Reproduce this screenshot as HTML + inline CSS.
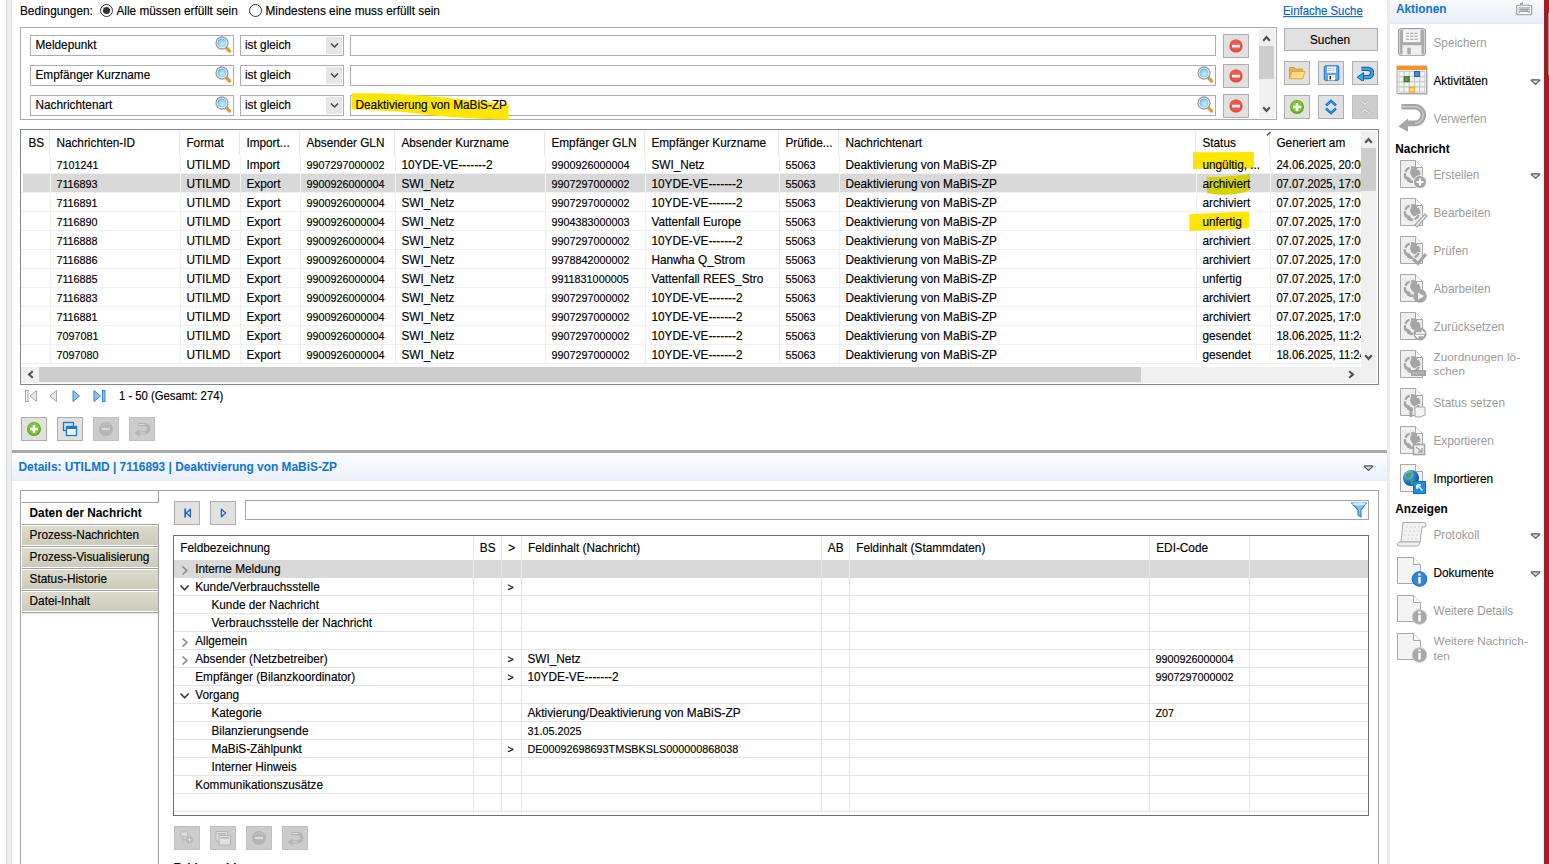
<!DOCTYPE html><html><head><meta charset="utf-8"><style>
html,body{margin:0;padding:0;background:#fff;}
body{width:1549px;height:864px;overflow:hidden;position:relative;font-family:"Liberation Sans",sans-serif;}
.t{position:absolute;white-space:nowrap;line-height:16px;}
.r{position:absolute;box-sizing:border-box;}
.clip{position:absolute;overflow:hidden;}
</style></head><body>
<div class="r" style="left:6px;top:0px;width:6px;height:864px;background:#eeeeee;border-left:1px solid #d6d6d6;border-right:1px solid #dedede;"></div>
<div class="t " style="left:20px;top:2.91px;font-size:11.8px;color:#000;font-weight:400;transform:scaleY(1.08);transform-origin:0 12.09px;-webkit-text-stroke:0.15px #000;">Bedingungen:</div>
<svg class="r" style="left:100px;top:4px;" width="14" height="14" viewBox="0 0 14 14"><circle cx="6.5" cy="6.5" r="6" fill="#fff" stroke="#333" stroke-width="1"/><circle cx="6.5" cy="6.5" r="3.5" fill="#333"/></svg>
<div class="t " style="left:116.5px;top:2.91px;font-size:11.8px;color:#000;font-weight:400;transform:scaleY(1.08);transform-origin:0 12.09px;-webkit-text-stroke:0.15px #000;">Alle müssen erfüllt sein</div>
<svg class="r" style="left:249px;top:4px;" width="14" height="14" viewBox="0 0 14 14"><circle cx="6.5" cy="6.5" r="6" fill="#fff" stroke="#333" stroke-width="1"/></svg>
<div class="t " style="left:265.5px;top:2.91px;font-size:11.8px;color:#000;font-weight:400;transform:scaleY(1.08);transform-origin:0 12.09px;-webkit-text-stroke:0.15px #000;">Mindestens eine muss erfüllt sein</div>
<div class="t " style="left:1283px;top:3.05px;font-size:11.4px;color:#0b62c9;font-weight:400;transform:scaleY(1.08);transform-origin:0 11.95px;-webkit-text-stroke:0.15px #0b62c9;text-decoration:underline;">Einfache Suche</div>
<div class="r" style="left:20px;top:27px;width:1257px;height:93px;border:1px solid #a9abb0;"></div>
<div class="r" style="left:30px;top:35px;width:204px;height:21px;border:1px solid #abadb3;background:#fff;"></div>
<div class="t " style="left:35.5px;top:36.91px;font-size:11.8px;color:#000;font-weight:400;transform:scaleY(1.08);transform-origin:0 12.09px;-webkit-text-stroke:0.15px #000;">Meldepunkt</div>
<svg class="r" style="left:215.0px;top:36.3px;" width="17" height="17" viewBox="0 0 17 17"><defs><radialGradient id="mg265" cx="55%" cy="60%" r="60%"><stop offset="0" stop-color="#c6f0fb"/><stop offset=".7" stop-color="#8fd0f3"/><stop offset="1" stop-color="#4ea3e6"/></radialGradient></defs><path d="M11 11.5 L14.5 15" stroke="#e49a2c" stroke-width="3.2" stroke-linecap="round"/><circle cx="7" cy="7" r="6" fill="#fff" stroke="#9c9ea2" stroke-width="1.3"/><circle cx="7" cy="7" r="4.6" fill="url(#mg265)"/></svg>
<div class="r" style="left:240px;top:35px;width:104px;height:21px;border:1px solid #abadb3;background:#fff;"></div>
<div class="r" style="left:326px;top:37px;width:16px;height:17px;background:#e6e6e6;"></div>
<svg class="r" style="left:330px;top:41px;" width="9" height="9" viewBox="0 0 9 9"><path d="M1 2.5 L4.5 6 L8 2.5" fill="none" stroke="#444" stroke-width="1.5"/></svg>
<div class="t " style="left:245px;top:36.91px;font-size:11.8px;color:#000;font-weight:400;transform:scaleY(1.08);transform-origin:0 12.09px;-webkit-text-stroke:0.15px #000;">ist gleich</div>
<div class="r" style="left:350px;top:35px;width:866px;height:21px;border:1px solid #abadb3;background:#fff;"></div>
<div class="r" style="left:1223px;top:34px;width:26px;height:24px;background:#e1e1e1;border:1px solid #adadad;"></div>
<svg class="r" style="left:1229px;top:39px;" width="14" height="14" viewBox="0 0 14 14"><circle cx="7" cy="7" r="6.6" fill="#e8463c"/><circle cx="7" cy="6" r="5.5" fill="#f0584c"/><rect x="3" y="5.8" width="8" height="2.6" fill="#fff"/></svg>
<div class="r" style="left:30px;top:65px;width:204px;height:21px;border:1px solid #abadb3;background:#fff;"></div>
<div class="t " style="left:35.5px;top:66.91px;font-size:11.8px;color:#000;font-weight:400;transform:scaleY(1.08);transform-origin:0 12.09px;-webkit-text-stroke:0.15px #000;">Empfänger Kurzname</div>
<svg class="r" style="left:215.0px;top:66.3px;" width="17" height="17" viewBox="0 0 17 17"><defs><radialGradient id="mg295" cx="55%" cy="60%" r="60%"><stop offset="0" stop-color="#c6f0fb"/><stop offset=".7" stop-color="#8fd0f3"/><stop offset="1" stop-color="#4ea3e6"/></radialGradient></defs><path d="M11 11.5 L14.5 15" stroke="#e49a2c" stroke-width="3.2" stroke-linecap="round"/><circle cx="7" cy="7" r="6" fill="#fff" stroke="#9c9ea2" stroke-width="1.3"/><circle cx="7" cy="7" r="4.6" fill="url(#mg295)"/></svg>
<div class="r" style="left:240px;top:65px;width:104px;height:21px;border:1px solid #abadb3;background:#fff;"></div>
<div class="r" style="left:326px;top:67px;width:16px;height:17px;background:#e6e6e6;"></div>
<svg class="r" style="left:330px;top:71px;" width="9" height="9" viewBox="0 0 9 9"><path d="M1 2.5 L4.5 6 L8 2.5" fill="none" stroke="#444" stroke-width="1.5"/></svg>
<div class="t " style="left:245px;top:66.91px;font-size:11.8px;color:#000;font-weight:400;transform:scaleY(1.08);transform-origin:0 12.09px;-webkit-text-stroke:0.15px #000;">ist gleich</div>
<div class="r" style="left:350px;top:65px;width:866px;height:21px;border:1px solid #abadb3;background:#fff;"></div>
<svg class="r" style="left:1197.0px;top:66.3px;" width="17" height="17" viewBox="0 0 17 17"><defs><radialGradient id="mg1277" cx="55%" cy="60%" r="60%"><stop offset="0" stop-color="#c6f0fb"/><stop offset=".7" stop-color="#8fd0f3"/><stop offset="1" stop-color="#4ea3e6"/></radialGradient></defs><path d="M11 11.5 L14.5 15" stroke="#e49a2c" stroke-width="3.2" stroke-linecap="round"/><circle cx="7" cy="7" r="6" fill="#fff" stroke="#9c9ea2" stroke-width="1.3"/><circle cx="7" cy="7" r="4.6" fill="url(#mg1277)"/></svg>
<div class="r" style="left:1223px;top:64px;width:26px;height:24px;background:#e1e1e1;border:1px solid #adadad;"></div>
<svg class="r" style="left:1229px;top:69px;" width="14" height="14" viewBox="0 0 14 14"><circle cx="7" cy="7" r="6.6" fill="#e8463c"/><circle cx="7" cy="6" r="5.5" fill="#f0584c"/><rect x="3" y="5.8" width="8" height="2.6" fill="#fff"/></svg>
<div class="r" style="left:30px;top:95px;width:204px;height:21px;border:1px solid #abadb3;background:#fff;"></div>
<div class="t " style="left:35.5px;top:96.91px;font-size:11.8px;color:#000;font-weight:400;transform:scaleY(1.08);transform-origin:0 12.09px;-webkit-text-stroke:0.15px #000;">Nachrichtenart</div>
<svg class="r" style="left:215.0px;top:96.3px;" width="17" height="17" viewBox="0 0 17 17"><defs><radialGradient id="mg325" cx="55%" cy="60%" r="60%"><stop offset="0" stop-color="#c6f0fb"/><stop offset=".7" stop-color="#8fd0f3"/><stop offset="1" stop-color="#4ea3e6"/></radialGradient></defs><path d="M11 11.5 L14.5 15" stroke="#e49a2c" stroke-width="3.2" stroke-linecap="round"/><circle cx="7" cy="7" r="6" fill="#fff" stroke="#9c9ea2" stroke-width="1.3"/><circle cx="7" cy="7" r="4.6" fill="url(#mg325)"/></svg>
<div class="r" style="left:240px;top:95px;width:104px;height:21px;border:1px solid #abadb3;background:#fff;"></div>
<div class="r" style="left:326px;top:97px;width:16px;height:17px;background:#e6e6e6;"></div>
<svg class="r" style="left:330px;top:101px;" width="9" height="9" viewBox="0 0 9 9"><path d="M1 2.5 L4.5 6 L8 2.5" fill="none" stroke="#444" stroke-width="1.5"/></svg>
<div class="t " style="left:245px;top:96.91px;font-size:11.8px;color:#000;font-weight:400;transform:scaleY(1.08);transform-origin:0 12.09px;-webkit-text-stroke:0.15px #000;">ist gleich</div>
<div class="r" style="left:350px;top:95px;width:866px;height:21px;border:1px solid #abadb3;background:#fff;"></div>
<svg class="r" style="left:1197.0px;top:96.3px;" width="17" height="17" viewBox="0 0 17 17"><defs><radialGradient id="mg1307" cx="55%" cy="60%" r="60%"><stop offset="0" stop-color="#c6f0fb"/><stop offset=".7" stop-color="#8fd0f3"/><stop offset="1" stop-color="#4ea3e6"/></radialGradient></defs><path d="M11 11.5 L14.5 15" stroke="#e49a2c" stroke-width="3.2" stroke-linecap="round"/><circle cx="7" cy="7" r="6" fill="#fff" stroke="#9c9ea2" stroke-width="1.3"/><circle cx="7" cy="7" r="4.6" fill="url(#mg1307)"/></svg>
<svg class="r" style="left:340px;top:90px;" width="180" height="32" viewBox="0 0 180 32"><path d="M11.6 3.5 C45 2.8 85 5 130 10.5 L168.6 14 L168.6 29.7 C130 29 95 26 58 21.5 L11.6 19.2 Z" fill="#ffe600"/></svg>
<div class="t " style="left:355.5px;top:96.51px;font-size:11.8px;color:#000;font-weight:400;transform:scaleY(1.08);transform-origin:0 12.09px;-webkit-text-stroke:0.15px #000;">Deaktivierung von MaBiS-ZP</div>
<div class="r" style="left:1223px;top:94px;width:26px;height:24px;background:#e1e1e1;border:1px solid #adadad;"></div>
<svg class="r" style="left:1229px;top:99px;" width="14" height="14" viewBox="0 0 14 14"><circle cx="7" cy="7" r="6.6" fill="#e8463c"/><circle cx="7" cy="6" r="5.5" fill="#f0584c"/><rect x="3" y="5.8" width="8" height="2.6" fill="#fff"/></svg>
<div class="r" style="left:1259px;top:29px;width:16px;height:89px;background:#f0f0f0;"></div>
<div class="r" style="left:1259px;top:46px;width:15px;height:33px;background:#cdcdcd;"></div>
<svg class="r" style="left:1262px;top:34px;" width="10" height="9" viewBox="0 0 10 9"><path d="M1.2 6.8 L4.5 3 L7.8 6.8" fill="none" stroke="#505050" stroke-width="2.1"/></svg>
<svg class="r" style="left:1262px;top:106px;" width="10" height="9" viewBox="0 0 10 9"><path d="M1.2 1.2 L4.5 5 L7.8 1.2" fill="none" stroke="#505050" stroke-width="2.1"/></svg>
<div class="r" style="left:1284px;top:28px;width:94px;height:23px;background:#e1e1e1;border:1px solid #adadad;"></div>
<div class="t " style="left:1310px;top:31.91px;font-size:11.8px;color:#000;font-weight:400;transform:scaleY(1.08);transform-origin:0 12.09px;-webkit-text-stroke:0.15px #000;">Suchen</div>
<div class="r" style="left:1284px;top:61px;width:26px;height:24px;background:#e1e1e1;border:1px solid #adadad;"></div>
<svg class="r" style="left:1288px;top:65px;" width="18" height="16" viewBox="0 0 18 16"><path d="M1.5 2.5 h5 l1.5 1.5 h6.5 v9.5 h-13z" fill="#e7b24a" stroke="#d39a30" stroke-width=".8"/><path d="M4 6.5 h13 l-2.2 7.3 h-13.3z" fill="#fbdc86" stroke="#d9a233" stroke-width=".8"/></svg>
<div class="r" style="left:1318px;top:61px;width:26px;height:24px;background:#e1e1e1;border:1px solid #adadad;"></div>
<svg class="r" style="left:1322px;top:65px;" width="18" height="16" viewBox="0 0 18 16"><rect x="2.3" y="0.8" width="14.5" height="14.5" rx="1.2" fill="#5aa7ea" stroke="#1670c8" stroke-width="1"/><rect x="5" y="1.5" width="9" height="6.2" fill="#fbfdff"/><path d="M6 3.3 H13 M6 5.6 H13" stroke="#7a8a9a" stroke-width=".7" stroke-dasharray="1.6 .6"/><rect x="6" y="10" width="7.2" height="5.3" fill="#f4f6f8"/><rect x="7.6" y="11" width="1.4" height="3.5" fill="#222"/></svg>
<div class="r" style="left:1352px;top:61px;width:26px;height:24px;background:#e1e1e1;border:1px solid #adadad;"></div>
<svg class="r" style="left:1356px;top:65px;" width="18" height="16" viewBox="0 0 18 16"><path d="M5.5 3.8 H12 A4.2 4.2 0 0 1 12 12.2 H7" fill="none" stroke="#0f5cb2" stroke-width="4.2"/><path d="M5.5 3.8 H12 A4.2 4.2 0 0 1 12 12.2 H7" fill="none" stroke="#36abe6" stroke-width="2.2"/><path d="M1.2 12.2 L7.5 7.6 L7.5 16.8z" fill="#36abe6" stroke="#0f5cb2" stroke-width="1"/></svg>
<div class="r" style="left:1284px;top:95px;width:26px;height:24px;background:#e1e1e1;border:1px solid #adadad;"></div>
<svg class="r" style="left:1288px;top:99px;" width="18" height="16" viewBox="0 0 18 16"><circle cx="9" cy="8" r="7" fill="#5aa81e"/><circle cx="9" cy="7.5" r="6" fill="#7cc431"/><rect x="5" y="6.7" width="8" height="2.6" fill="#fff"/><rect x="7.7" y="4" width="2.6" height="8" fill="#fff"/></svg>
<div class="r" style="left:1318px;top:95px;width:26px;height:24px;background:#e1e1e1;border:1px solid #adadad;"></div>
<svg class="r" style="left:1322px;top:99px;" width="18" height="16" viewBox="0 0 18 16"><path d="M4 6.5 L9 2 L14 6.5" fill="none" stroke="#1672c9" stroke-width="2.6"/><path d="M4 9.5 L9 14 L14 9.5" fill="none" stroke="#1672c9" stroke-width="2.6"/><path d="M4.5 6.2 L9 2.6 L13.5 6.2 M4.5 9.8 L9 13.4 L13.5 9.8" fill="none" stroke="#3da0ea" stroke-width="1"/></svg>
<div class="r" style="left:1352px;top:95px;width:26px;height:24px;background:#cccccc;border:1px solid #bfbfbf;"></div>
<svg class="r" style="left:1356px;top:99px;" width="18" height="16" viewBox="0 0 18 16"><path d="M5 2 L9 5.5 L13 2 M5 14 L9 10.5 L13 14" fill="none" stroke="#b4b4b4" stroke-width="2.4"/><path d="M5 2 L9 5.5 L13 2 M5 14 L9 10.5 L13 14" fill="none" stroke="#e6e6e6" stroke-width="1.1"/></svg>
<div class="r" style="left:20px;top:129px;width:1359px;height:256px;border:1px solid #828790;background:#fff;"></div>
<div class="clip" style="left:21px;top:130px;width:1340px;height:237px;">
<div class="r" style="left:28px;top:1px;width:1px;height:24px;background:#e5e5e5;"></div>
<div class="r" style="left:158px;top:1px;width:1px;height:24px;background:#e5e5e5;"></div>
<div class="r" style="left:218px;top:1px;width:1px;height:24px;background:#e5e5e5;"></div>
<div class="r" style="left:278px;top:1px;width:1px;height:24px;background:#e5e5e5;"></div>
<div class="r" style="left:373px;top:1px;width:1px;height:24px;background:#e5e5e5;"></div>
<div class="r" style="left:523px;top:1px;width:1px;height:24px;background:#e5e5e5;"></div>
<div class="r" style="left:623px;top:1px;width:1px;height:24px;background:#e5e5e5;"></div>
<div class="r" style="left:757px;top:1px;width:1px;height:24px;background:#e5e5e5;"></div>
<div class="r" style="left:817px;top:1px;width:1px;height:24px;background:#e5e5e5;"></div>
<div class="r" style="left:1174px;top:1px;width:1px;height:24px;background:#e5e5e5;"></div>
<div class="r" style="left:1248px;top:5px;width:1px;height:20px;background:#e5e5e5;"></div>
<div class="r" style="left:1245px;top:1px;width:5px;height:5px;"></div>
<svg class="r" style="left:1245px;top:1px" width="6" height="6"><path d="M1 4.5 L4.5 1" stroke="#505050" stroke-width="1.6"/></svg>
<div class="t " style="left:7.399999999999999px;top:4.91px;font-size:11.8px;color:#000;font-weight:400;transform:scaleY(1.08);transform-origin:0 12.09px;-webkit-text-stroke:0.15px #000;">BS</div>
<div class="t " style="left:35.4px;top:4.91px;font-size:11.8px;color:#000;font-weight:400;transform:scaleY(1.08);transform-origin:0 12.09px;-webkit-text-stroke:0.15px #000;">Nachrichten-ID</div>
<div class="t " style="left:165.4px;top:4.91px;font-size:11.8px;color:#000;font-weight:400;transform:scaleY(1.08);transform-origin:0 12.09px;-webkit-text-stroke:0.15px #000;">Format</div>
<div class="t " style="left:225.4px;top:4.91px;font-size:11.8px;color:#000;font-weight:400;transform:scaleY(1.08);transform-origin:0 12.09px;-webkit-text-stroke:0.15px #000;">Import...</div>
<div class="t " style="left:285.4px;top:4.91px;font-size:11.8px;color:#000;font-weight:400;transform:scaleY(1.08);transform-origin:0 12.09px;-webkit-text-stroke:0.15px #000;">Absender GLN</div>
<div class="t " style="left:380.4px;top:4.91px;font-size:11.8px;color:#000;font-weight:400;transform:scaleY(1.08);transform-origin:0 12.09px;-webkit-text-stroke:0.15px #000;">Absender Kurzname</div>
<div class="t " style="left:530.4px;top:4.91px;font-size:11.8px;color:#000;font-weight:400;transform:scaleY(1.08);transform-origin:0 12.09px;-webkit-text-stroke:0.15px #000;">Empfänger GLN</div>
<div class="t " style="left:630.4px;top:4.91px;font-size:11.8px;color:#000;font-weight:400;transform:scaleY(1.08);transform-origin:0 12.09px;-webkit-text-stroke:0.15px #000;">Empfänger Kurzname</div>
<div class="t " style="left:764.4px;top:4.91px;font-size:11.8px;color:#000;font-weight:400;transform:scaleY(1.08);transform-origin:0 12.09px;-webkit-text-stroke:0.15px #000;">Prüfide...</div>
<div class="t " style="left:824.4px;top:4.91px;font-size:11.8px;color:#000;font-weight:400;transform:scaleY(1.08);transform-origin:0 12.09px;-webkit-text-stroke:0.15px #000;">Nachrichtenart</div>
<div class="t " style="left:1181.4px;top:4.91px;font-size:11.8px;color:#000;font-weight:400;transform:scaleY(1.08);transform-origin:0 12.09px;-webkit-text-stroke:0.15px #000;">Status</div>
<div class="t " style="left:1255.4px;top:4.91px;font-size:11.8px;color:#000;font-weight:400;transform:scaleY(1.08);transform-origin:0 12.09px;-webkit-text-stroke:0.15px #000;">Generiert am</div>
<div class="r" style="left:29px;top:25px;width:1px;height:19px;background:#f0f0f0;"></div>
<div class="r" style="left:159px;top:25px;width:1px;height:19px;background:#f0f0f0;"></div>
<div class="r" style="left:219px;top:25px;width:1px;height:19px;background:#f0f0f0;"></div>
<div class="r" style="left:279px;top:25px;width:1px;height:19px;background:#f0f0f0;"></div>
<div class="r" style="left:374px;top:25px;width:1px;height:19px;background:#f0f0f0;"></div>
<div class="r" style="left:524px;top:25px;width:1px;height:19px;background:#f0f0f0;"></div>
<div class="r" style="left:624px;top:25px;width:1px;height:19px;background:#f0f0f0;"></div>
<div class="r" style="left:758px;top:25px;width:1px;height:19px;background:#f0f0f0;"></div>
<div class="r" style="left:818px;top:25px;width:1px;height:19px;background:#f0f0f0;"></div>
<div class="r" style="left:1175px;top:25px;width:1px;height:19px;background:#f0f0f0;"></div>
<div class="r" style="left:1249px;top:25px;width:1px;height:19px;background:#f0f0f0;"></div>
<div class="r" style="left:0px;top:43px;width:1340px;height:1px;background:#f0f0f0;"></div>
<div class="r" style="left:2px;top:44px;width:1338px;height:18px;background:#d9d9d9;"></div>
<div class="r" style="left:0px;top:62px;width:1340px;height:1px;background:#f0f0f0;"></div>
<div class="r" style="left:29px;top:44px;width:1px;height:19px;background:#f4f4f4;"></div>
<div class="r" style="left:159px;top:44px;width:1px;height:19px;background:#f4f4f4;"></div>
<div class="r" style="left:219px;top:44px;width:1px;height:19px;background:#f4f4f4;"></div>
<div class="r" style="left:279px;top:44px;width:1px;height:19px;background:#f4f4f4;"></div>
<div class="r" style="left:374px;top:44px;width:1px;height:19px;background:#f4f4f4;"></div>
<div class="r" style="left:524px;top:44px;width:1px;height:19px;background:#f4f4f4;"></div>
<div class="r" style="left:624px;top:44px;width:1px;height:19px;background:#f4f4f4;"></div>
<div class="r" style="left:758px;top:44px;width:1px;height:19px;background:#f4f4f4;"></div>
<div class="r" style="left:818px;top:44px;width:1px;height:19px;background:#f4f4f4;"></div>
<div class="r" style="left:1175px;top:44px;width:1px;height:19px;background:#f4f4f4;"></div>
<div class="r" style="left:1249px;top:44px;width:1px;height:19px;background:#f4f4f4;"></div>
<div class="r" style="left:29px;top:63px;width:1px;height:19px;background:#f0f0f0;"></div>
<div class="r" style="left:159px;top:63px;width:1px;height:19px;background:#f0f0f0;"></div>
<div class="r" style="left:219px;top:63px;width:1px;height:19px;background:#f0f0f0;"></div>
<div class="r" style="left:279px;top:63px;width:1px;height:19px;background:#f0f0f0;"></div>
<div class="r" style="left:374px;top:63px;width:1px;height:19px;background:#f0f0f0;"></div>
<div class="r" style="left:524px;top:63px;width:1px;height:19px;background:#f0f0f0;"></div>
<div class="r" style="left:624px;top:63px;width:1px;height:19px;background:#f0f0f0;"></div>
<div class="r" style="left:758px;top:63px;width:1px;height:19px;background:#f0f0f0;"></div>
<div class="r" style="left:818px;top:63px;width:1px;height:19px;background:#f0f0f0;"></div>
<div class="r" style="left:1175px;top:63px;width:1px;height:19px;background:#f0f0f0;"></div>
<div class="r" style="left:1249px;top:63px;width:1px;height:19px;background:#f0f0f0;"></div>
<div class="r" style="left:0px;top:81px;width:1340px;height:1px;background:#f0f0f0;"></div>
<div class="r" style="left:29px;top:82px;width:1px;height:19px;background:#f0f0f0;"></div>
<div class="r" style="left:159px;top:82px;width:1px;height:19px;background:#f0f0f0;"></div>
<div class="r" style="left:219px;top:82px;width:1px;height:19px;background:#f0f0f0;"></div>
<div class="r" style="left:279px;top:82px;width:1px;height:19px;background:#f0f0f0;"></div>
<div class="r" style="left:374px;top:82px;width:1px;height:19px;background:#f0f0f0;"></div>
<div class="r" style="left:524px;top:82px;width:1px;height:19px;background:#f0f0f0;"></div>
<div class="r" style="left:624px;top:82px;width:1px;height:19px;background:#f0f0f0;"></div>
<div class="r" style="left:758px;top:82px;width:1px;height:19px;background:#f0f0f0;"></div>
<div class="r" style="left:818px;top:82px;width:1px;height:19px;background:#f0f0f0;"></div>
<div class="r" style="left:1175px;top:82px;width:1px;height:19px;background:#f0f0f0;"></div>
<div class="r" style="left:1249px;top:82px;width:1px;height:19px;background:#f0f0f0;"></div>
<div class="r" style="left:0px;top:100px;width:1340px;height:1px;background:#f0f0f0;"></div>
<div class="r" style="left:29px;top:101px;width:1px;height:19px;background:#f0f0f0;"></div>
<div class="r" style="left:159px;top:101px;width:1px;height:19px;background:#f0f0f0;"></div>
<div class="r" style="left:219px;top:101px;width:1px;height:19px;background:#f0f0f0;"></div>
<div class="r" style="left:279px;top:101px;width:1px;height:19px;background:#f0f0f0;"></div>
<div class="r" style="left:374px;top:101px;width:1px;height:19px;background:#f0f0f0;"></div>
<div class="r" style="left:524px;top:101px;width:1px;height:19px;background:#f0f0f0;"></div>
<div class="r" style="left:624px;top:101px;width:1px;height:19px;background:#f0f0f0;"></div>
<div class="r" style="left:758px;top:101px;width:1px;height:19px;background:#f0f0f0;"></div>
<div class="r" style="left:818px;top:101px;width:1px;height:19px;background:#f0f0f0;"></div>
<div class="r" style="left:1175px;top:101px;width:1px;height:19px;background:#f0f0f0;"></div>
<div class="r" style="left:1249px;top:101px;width:1px;height:19px;background:#f0f0f0;"></div>
<div class="r" style="left:0px;top:119px;width:1340px;height:1px;background:#f0f0f0;"></div>
<div class="r" style="left:29px;top:120px;width:1px;height:19px;background:#f0f0f0;"></div>
<div class="r" style="left:159px;top:120px;width:1px;height:19px;background:#f0f0f0;"></div>
<div class="r" style="left:219px;top:120px;width:1px;height:19px;background:#f0f0f0;"></div>
<div class="r" style="left:279px;top:120px;width:1px;height:19px;background:#f0f0f0;"></div>
<div class="r" style="left:374px;top:120px;width:1px;height:19px;background:#f0f0f0;"></div>
<div class="r" style="left:524px;top:120px;width:1px;height:19px;background:#f0f0f0;"></div>
<div class="r" style="left:624px;top:120px;width:1px;height:19px;background:#f0f0f0;"></div>
<div class="r" style="left:758px;top:120px;width:1px;height:19px;background:#f0f0f0;"></div>
<div class="r" style="left:818px;top:120px;width:1px;height:19px;background:#f0f0f0;"></div>
<div class="r" style="left:1175px;top:120px;width:1px;height:19px;background:#f0f0f0;"></div>
<div class="r" style="left:1249px;top:120px;width:1px;height:19px;background:#f0f0f0;"></div>
<div class="r" style="left:0px;top:138px;width:1340px;height:1px;background:#f0f0f0;"></div>
<div class="r" style="left:29px;top:139px;width:1px;height:19px;background:#f0f0f0;"></div>
<div class="r" style="left:159px;top:139px;width:1px;height:19px;background:#f0f0f0;"></div>
<div class="r" style="left:219px;top:139px;width:1px;height:19px;background:#f0f0f0;"></div>
<div class="r" style="left:279px;top:139px;width:1px;height:19px;background:#f0f0f0;"></div>
<div class="r" style="left:374px;top:139px;width:1px;height:19px;background:#f0f0f0;"></div>
<div class="r" style="left:524px;top:139px;width:1px;height:19px;background:#f0f0f0;"></div>
<div class="r" style="left:624px;top:139px;width:1px;height:19px;background:#f0f0f0;"></div>
<div class="r" style="left:758px;top:139px;width:1px;height:19px;background:#f0f0f0;"></div>
<div class="r" style="left:818px;top:139px;width:1px;height:19px;background:#f0f0f0;"></div>
<div class="r" style="left:1175px;top:139px;width:1px;height:19px;background:#f0f0f0;"></div>
<div class="r" style="left:1249px;top:139px;width:1px;height:19px;background:#f0f0f0;"></div>
<div class="r" style="left:0px;top:157px;width:1340px;height:1px;background:#f0f0f0;"></div>
<div class="r" style="left:29px;top:158px;width:1px;height:19px;background:#f0f0f0;"></div>
<div class="r" style="left:159px;top:158px;width:1px;height:19px;background:#f0f0f0;"></div>
<div class="r" style="left:219px;top:158px;width:1px;height:19px;background:#f0f0f0;"></div>
<div class="r" style="left:279px;top:158px;width:1px;height:19px;background:#f0f0f0;"></div>
<div class="r" style="left:374px;top:158px;width:1px;height:19px;background:#f0f0f0;"></div>
<div class="r" style="left:524px;top:158px;width:1px;height:19px;background:#f0f0f0;"></div>
<div class="r" style="left:624px;top:158px;width:1px;height:19px;background:#f0f0f0;"></div>
<div class="r" style="left:758px;top:158px;width:1px;height:19px;background:#f0f0f0;"></div>
<div class="r" style="left:818px;top:158px;width:1px;height:19px;background:#f0f0f0;"></div>
<div class="r" style="left:1175px;top:158px;width:1px;height:19px;background:#f0f0f0;"></div>
<div class="r" style="left:1249px;top:158px;width:1px;height:19px;background:#f0f0f0;"></div>
<div class="r" style="left:0px;top:176px;width:1340px;height:1px;background:#f0f0f0;"></div>
<div class="r" style="left:29px;top:177px;width:1px;height:19px;background:#f0f0f0;"></div>
<div class="r" style="left:159px;top:177px;width:1px;height:19px;background:#f0f0f0;"></div>
<div class="r" style="left:219px;top:177px;width:1px;height:19px;background:#f0f0f0;"></div>
<div class="r" style="left:279px;top:177px;width:1px;height:19px;background:#f0f0f0;"></div>
<div class="r" style="left:374px;top:177px;width:1px;height:19px;background:#f0f0f0;"></div>
<div class="r" style="left:524px;top:177px;width:1px;height:19px;background:#f0f0f0;"></div>
<div class="r" style="left:624px;top:177px;width:1px;height:19px;background:#f0f0f0;"></div>
<div class="r" style="left:758px;top:177px;width:1px;height:19px;background:#f0f0f0;"></div>
<div class="r" style="left:818px;top:177px;width:1px;height:19px;background:#f0f0f0;"></div>
<div class="r" style="left:1175px;top:177px;width:1px;height:19px;background:#f0f0f0;"></div>
<div class="r" style="left:1249px;top:177px;width:1px;height:19px;background:#f0f0f0;"></div>
<div class="r" style="left:0px;top:195px;width:1340px;height:1px;background:#f0f0f0;"></div>
<div class="r" style="left:29px;top:196px;width:1px;height:19px;background:#f0f0f0;"></div>
<div class="r" style="left:159px;top:196px;width:1px;height:19px;background:#f0f0f0;"></div>
<div class="r" style="left:219px;top:196px;width:1px;height:19px;background:#f0f0f0;"></div>
<div class="r" style="left:279px;top:196px;width:1px;height:19px;background:#f0f0f0;"></div>
<div class="r" style="left:374px;top:196px;width:1px;height:19px;background:#f0f0f0;"></div>
<div class="r" style="left:524px;top:196px;width:1px;height:19px;background:#f0f0f0;"></div>
<div class="r" style="left:624px;top:196px;width:1px;height:19px;background:#f0f0f0;"></div>
<div class="r" style="left:758px;top:196px;width:1px;height:19px;background:#f0f0f0;"></div>
<div class="r" style="left:818px;top:196px;width:1px;height:19px;background:#f0f0f0;"></div>
<div class="r" style="left:1175px;top:196px;width:1px;height:19px;background:#f0f0f0;"></div>
<div class="r" style="left:1249px;top:196px;width:1px;height:19px;background:#f0f0f0;"></div>
<div class="r" style="left:0px;top:214px;width:1340px;height:1px;background:#f0f0f0;"></div>
<div class="r" style="left:29px;top:215px;width:1px;height:19px;background:#f0f0f0;"></div>
<div class="r" style="left:159px;top:215px;width:1px;height:19px;background:#f0f0f0;"></div>
<div class="r" style="left:219px;top:215px;width:1px;height:19px;background:#f0f0f0;"></div>
<div class="r" style="left:279px;top:215px;width:1px;height:19px;background:#f0f0f0;"></div>
<div class="r" style="left:374px;top:215px;width:1px;height:19px;background:#f0f0f0;"></div>
<div class="r" style="left:524px;top:215px;width:1px;height:19px;background:#f0f0f0;"></div>
<div class="r" style="left:624px;top:215px;width:1px;height:19px;background:#f0f0f0;"></div>
<div class="r" style="left:758px;top:215px;width:1px;height:19px;background:#f0f0f0;"></div>
<div class="r" style="left:818px;top:215px;width:1px;height:19px;background:#f0f0f0;"></div>
<div class="r" style="left:1175px;top:215px;width:1px;height:19px;background:#f0f0f0;"></div>
<div class="r" style="left:1249px;top:215px;width:1px;height:19px;background:#f0f0f0;"></div>
<div class="r" style="left:0px;top:233px;width:1340px;height:1px;background:#f0f0f0;"></div>
<svg class="r" style="left:1159px;top:15px" width="80" height="90" viewBox="0 0 80 90"><path d="M13 7.3 L74 7 L74 23.4 L13 24 Z" fill="#ffe600"/><path d="M26.9 31.8 C40 32.5 55 31 70 29 L70 44.8 C60 50 45 51 26.9 47.9 Z" fill="#d2d300"/><path d="M9.4 69.3 C30 68 50 67 69 66.7 L69 83.3 C50 84 30 85 9.4 86 Z" fill="#ffe600"/></svg>
<div class="t " style="left:35.4px;top:27.26px;font-size:10.8px;color:#000;font-weight:400;transform:scaleY(1.08);transform-origin:0 11.74px;-webkit-text-stroke:0.15px #000;">7101241</div>
<div class="t " style="left:165.4px;top:26.91px;font-size:11.8px;color:#000;font-weight:400;transform:scaleY(1.08);transform-origin:0 12.09px;-webkit-text-stroke:0.15px #000;">UTILMD</div>
<div class="t " style="left:225.4px;top:26.91px;font-size:11.8px;color:#000;font-weight:400;transform:scaleY(1.08);transform-origin:0 12.09px;-webkit-text-stroke:0.15px #000;">Import</div>
<div class="t " style="left:285.4px;top:27.26px;font-size:10.8px;color:#000;font-weight:400;transform:scaleY(1.08);transform-origin:0 11.74px;-webkit-text-stroke:0.15px #000;">9907297000002</div>
<div class="t " style="left:380.4px;top:26.91px;font-size:11.8px;color:#000;font-weight:400;transform:scaleY(1.08);transform-origin:0 12.09px;-webkit-text-stroke:0.15px #000;">10YDE-VE-------2</div>
<div class="t " style="left:530.4px;top:27.26px;font-size:10.8px;color:#000;font-weight:400;transform:scaleY(1.08);transform-origin:0 11.74px;-webkit-text-stroke:0.15px #000;">9900926000004</div>
<div class="t " style="left:630.4px;top:26.91px;font-size:11.8px;color:#000;font-weight:400;transform:scaleY(1.08);transform-origin:0 12.09px;-webkit-text-stroke:0.15px #000;">SWI_Netz</div>
<div class="t " style="left:764.4px;top:27.26px;font-size:10.8px;color:#000;font-weight:400;transform:scaleY(1.08);transform-origin:0 11.74px;-webkit-text-stroke:0.15px #000;">55063</div>
<div class="t " style="left:824.4px;top:26.91px;font-size:11.8px;color:#000;font-weight:400;transform:scaleY(1.08);transform-origin:0 12.09px;-webkit-text-stroke:0.15px #000;">Deaktivierung von MaBiS-ZP</div>
<div class="t " style="left:1181.4px;top:26.91px;font-size:11.8px;color:#000;font-weight:400;transform:scaleY(1.08);transform-origin:0 12.09px;-webkit-text-stroke:0.15px #000;">ungültig, ...</div>
<div class="t " style="left:1255.4px;top:27.12px;font-size:11.2px;color:#000;font-weight:400;transform:scaleY(1.08);transform-origin:0 11.88px;-webkit-text-stroke:0.15px #000;">24.06.2025, 20:00</div>
<div class="t " style="left:35.4px;top:46.26px;font-size:10.8px;color:#000;font-weight:400;transform:scaleY(1.08);transform-origin:0 11.74px;-webkit-text-stroke:0.15px #000;">7116893</div>
<div class="t " style="left:165.4px;top:45.91px;font-size:11.8px;color:#000;font-weight:400;transform:scaleY(1.08);transform-origin:0 12.09px;-webkit-text-stroke:0.15px #000;">UTILMD</div>
<div class="t " style="left:225.4px;top:45.91px;font-size:11.8px;color:#000;font-weight:400;transform:scaleY(1.08);transform-origin:0 12.09px;-webkit-text-stroke:0.15px #000;">Export</div>
<div class="t " style="left:285.4px;top:46.26px;font-size:10.8px;color:#000;font-weight:400;transform:scaleY(1.08);transform-origin:0 11.74px;-webkit-text-stroke:0.15px #000;">9900926000004</div>
<div class="t " style="left:380.4px;top:45.91px;font-size:11.8px;color:#000;font-weight:400;transform:scaleY(1.08);transform-origin:0 12.09px;-webkit-text-stroke:0.15px #000;">SWI_Netz</div>
<div class="t " style="left:530.4px;top:46.26px;font-size:10.8px;color:#000;font-weight:400;transform:scaleY(1.08);transform-origin:0 11.74px;-webkit-text-stroke:0.15px #000;">9907297000002</div>
<div class="t " style="left:630.4px;top:45.91px;font-size:11.8px;color:#000;font-weight:400;transform:scaleY(1.08);transform-origin:0 12.09px;-webkit-text-stroke:0.15px #000;">10YDE-VE-------2</div>
<div class="t " style="left:764.4px;top:46.26px;font-size:10.8px;color:#000;font-weight:400;transform:scaleY(1.08);transform-origin:0 11.74px;-webkit-text-stroke:0.15px #000;">55063</div>
<div class="t " style="left:824.4px;top:45.91px;font-size:11.8px;color:#000;font-weight:400;transform:scaleY(1.08);transform-origin:0 12.09px;-webkit-text-stroke:0.15px #000;">Deaktivierung von MaBiS-ZP</div>
<div class="t " style="left:1181.4px;top:45.91px;font-size:11.8px;color:#000;font-weight:400;transform:scaleY(1.08);transform-origin:0 12.09px;-webkit-text-stroke:0.15px #000;">archiviert</div>
<div class="t " style="left:1255.4px;top:46.12px;font-size:11.2px;color:#000;font-weight:400;transform:scaleY(1.08);transform-origin:0 11.88px;-webkit-text-stroke:0.15px #000;">07.07.2025, 17:06</div>
<div class="t " style="left:35.4px;top:65.26px;font-size:10.8px;color:#000;font-weight:400;transform:scaleY(1.08);transform-origin:0 11.74px;-webkit-text-stroke:0.15px #000;">7116891</div>
<div class="t " style="left:165.4px;top:64.91px;font-size:11.8px;color:#000;font-weight:400;transform:scaleY(1.08);transform-origin:0 12.09px;-webkit-text-stroke:0.15px #000;">UTILMD</div>
<div class="t " style="left:225.4px;top:64.91px;font-size:11.8px;color:#000;font-weight:400;transform:scaleY(1.08);transform-origin:0 12.09px;-webkit-text-stroke:0.15px #000;">Export</div>
<div class="t " style="left:285.4px;top:65.26px;font-size:10.8px;color:#000;font-weight:400;transform:scaleY(1.08);transform-origin:0 11.74px;-webkit-text-stroke:0.15px #000;">9900926000004</div>
<div class="t " style="left:380.4px;top:64.91px;font-size:11.8px;color:#000;font-weight:400;transform:scaleY(1.08);transform-origin:0 12.09px;-webkit-text-stroke:0.15px #000;">SWI_Netz</div>
<div class="t " style="left:530.4px;top:65.26px;font-size:10.8px;color:#000;font-weight:400;transform:scaleY(1.08);transform-origin:0 11.74px;-webkit-text-stroke:0.15px #000;">9907297000002</div>
<div class="t " style="left:630.4px;top:64.91px;font-size:11.8px;color:#000;font-weight:400;transform:scaleY(1.08);transform-origin:0 12.09px;-webkit-text-stroke:0.15px #000;">10YDE-VE-------2</div>
<div class="t " style="left:764.4px;top:65.26px;font-size:10.8px;color:#000;font-weight:400;transform:scaleY(1.08);transform-origin:0 11.74px;-webkit-text-stroke:0.15px #000;">55063</div>
<div class="t " style="left:824.4px;top:64.91px;font-size:11.8px;color:#000;font-weight:400;transform:scaleY(1.08);transform-origin:0 12.09px;-webkit-text-stroke:0.15px #000;">Deaktivierung von MaBiS-ZP</div>
<div class="t " style="left:1181.4px;top:64.91px;font-size:11.8px;color:#000;font-weight:400;transform:scaleY(1.08);transform-origin:0 12.09px;-webkit-text-stroke:0.15px #000;">archiviert</div>
<div class="t " style="left:1255.4px;top:65.12px;font-size:11.2px;color:#000;font-weight:400;transform:scaleY(1.08);transform-origin:0 11.88px;-webkit-text-stroke:0.15px #000;">07.07.2025, 17:06</div>
<div class="t " style="left:35.4px;top:84.26px;font-size:10.8px;color:#000;font-weight:400;transform:scaleY(1.08);transform-origin:0 11.74px;-webkit-text-stroke:0.15px #000;">7116890</div>
<div class="t " style="left:165.4px;top:83.91px;font-size:11.8px;color:#000;font-weight:400;transform:scaleY(1.08);transform-origin:0 12.09px;-webkit-text-stroke:0.15px #000;">UTILMD</div>
<div class="t " style="left:225.4px;top:83.91px;font-size:11.8px;color:#000;font-weight:400;transform:scaleY(1.08);transform-origin:0 12.09px;-webkit-text-stroke:0.15px #000;">Export</div>
<div class="t " style="left:285.4px;top:84.26px;font-size:10.8px;color:#000;font-weight:400;transform:scaleY(1.08);transform-origin:0 11.74px;-webkit-text-stroke:0.15px #000;">9900926000004</div>
<div class="t " style="left:380.4px;top:83.91px;font-size:11.8px;color:#000;font-weight:400;transform:scaleY(1.08);transform-origin:0 12.09px;-webkit-text-stroke:0.15px #000;">SWI_Netz</div>
<div class="t " style="left:530.4px;top:84.26px;font-size:10.8px;color:#000;font-weight:400;transform:scaleY(1.08);transform-origin:0 11.74px;-webkit-text-stroke:0.15px #000;">9904383000003</div>
<div class="t " style="left:630.4px;top:83.91px;font-size:11.8px;color:#000;font-weight:400;transform:scaleY(1.08);transform-origin:0 12.09px;-webkit-text-stroke:0.15px #000;">Vattenfall Europe</div>
<div class="t " style="left:764.4px;top:84.26px;font-size:10.8px;color:#000;font-weight:400;transform:scaleY(1.08);transform-origin:0 11.74px;-webkit-text-stroke:0.15px #000;">55063</div>
<div class="t " style="left:824.4px;top:83.91px;font-size:11.8px;color:#000;font-weight:400;transform:scaleY(1.08);transform-origin:0 12.09px;-webkit-text-stroke:0.15px #000;">Deaktivierung von MaBiS-ZP</div>
<div class="t " style="left:1181.4px;top:83.91px;font-size:11.8px;color:#000;font-weight:400;transform:scaleY(1.08);transform-origin:0 12.09px;-webkit-text-stroke:0.15px #000;">unfertig</div>
<div class="t " style="left:1255.4px;top:84.12px;font-size:11.2px;color:#000;font-weight:400;transform:scaleY(1.08);transform-origin:0 11.88px;-webkit-text-stroke:0.15px #000;">07.07.2025, 17:06</div>
<div class="t " style="left:35.4px;top:103.26px;font-size:10.8px;color:#000;font-weight:400;transform:scaleY(1.08);transform-origin:0 11.74px;-webkit-text-stroke:0.15px #000;">7116888</div>
<div class="t " style="left:165.4px;top:102.91px;font-size:11.8px;color:#000;font-weight:400;transform:scaleY(1.08);transform-origin:0 12.09px;-webkit-text-stroke:0.15px #000;">UTILMD</div>
<div class="t " style="left:225.4px;top:102.91px;font-size:11.8px;color:#000;font-weight:400;transform:scaleY(1.08);transform-origin:0 12.09px;-webkit-text-stroke:0.15px #000;">Export</div>
<div class="t " style="left:285.4px;top:103.26px;font-size:10.8px;color:#000;font-weight:400;transform:scaleY(1.08);transform-origin:0 11.74px;-webkit-text-stroke:0.15px #000;">9900926000004</div>
<div class="t " style="left:380.4px;top:102.91px;font-size:11.8px;color:#000;font-weight:400;transform:scaleY(1.08);transform-origin:0 12.09px;-webkit-text-stroke:0.15px #000;">SWI_Netz</div>
<div class="t " style="left:530.4px;top:103.26px;font-size:10.8px;color:#000;font-weight:400;transform:scaleY(1.08);transform-origin:0 11.74px;-webkit-text-stroke:0.15px #000;">9907297000002</div>
<div class="t " style="left:630.4px;top:102.91px;font-size:11.8px;color:#000;font-weight:400;transform:scaleY(1.08);transform-origin:0 12.09px;-webkit-text-stroke:0.15px #000;">10YDE-VE-------2</div>
<div class="t " style="left:764.4px;top:103.26px;font-size:10.8px;color:#000;font-weight:400;transform:scaleY(1.08);transform-origin:0 11.74px;-webkit-text-stroke:0.15px #000;">55063</div>
<div class="t " style="left:824.4px;top:102.91px;font-size:11.8px;color:#000;font-weight:400;transform:scaleY(1.08);transform-origin:0 12.09px;-webkit-text-stroke:0.15px #000;">Deaktivierung von MaBiS-ZP</div>
<div class="t " style="left:1181.4px;top:102.91px;font-size:11.8px;color:#000;font-weight:400;transform:scaleY(1.08);transform-origin:0 12.09px;-webkit-text-stroke:0.15px #000;">archiviert</div>
<div class="t " style="left:1255.4px;top:103.12px;font-size:11.2px;color:#000;font-weight:400;transform:scaleY(1.08);transform-origin:0 11.88px;-webkit-text-stroke:0.15px #000;">07.07.2025, 17:06</div>
<div class="t " style="left:35.4px;top:122.26px;font-size:10.8px;color:#000;font-weight:400;transform:scaleY(1.08);transform-origin:0 11.74px;-webkit-text-stroke:0.15px #000;">7116886</div>
<div class="t " style="left:165.4px;top:121.91px;font-size:11.8px;color:#000;font-weight:400;transform:scaleY(1.08);transform-origin:0 12.09px;-webkit-text-stroke:0.15px #000;">UTILMD</div>
<div class="t " style="left:225.4px;top:121.91px;font-size:11.8px;color:#000;font-weight:400;transform:scaleY(1.08);transform-origin:0 12.09px;-webkit-text-stroke:0.15px #000;">Export</div>
<div class="t " style="left:285.4px;top:122.26px;font-size:10.8px;color:#000;font-weight:400;transform:scaleY(1.08);transform-origin:0 11.74px;-webkit-text-stroke:0.15px #000;">9900926000004</div>
<div class="t " style="left:380.4px;top:121.91px;font-size:11.8px;color:#000;font-weight:400;transform:scaleY(1.08);transform-origin:0 12.09px;-webkit-text-stroke:0.15px #000;">SWI_Netz</div>
<div class="t " style="left:530.4px;top:122.26px;font-size:10.8px;color:#000;font-weight:400;transform:scaleY(1.08);transform-origin:0 11.74px;-webkit-text-stroke:0.15px #000;">9978842000002</div>
<div class="t " style="left:630.4px;top:121.91px;font-size:11.8px;color:#000;font-weight:400;transform:scaleY(1.08);transform-origin:0 12.09px;-webkit-text-stroke:0.15px #000;">Hanwha Q_Strom</div>
<div class="t " style="left:764.4px;top:122.26px;font-size:10.8px;color:#000;font-weight:400;transform:scaleY(1.08);transform-origin:0 11.74px;-webkit-text-stroke:0.15px #000;">55063</div>
<div class="t " style="left:824.4px;top:121.91px;font-size:11.8px;color:#000;font-weight:400;transform:scaleY(1.08);transform-origin:0 12.09px;-webkit-text-stroke:0.15px #000;">Deaktivierung von MaBiS-ZP</div>
<div class="t " style="left:1181.4px;top:121.91px;font-size:11.8px;color:#000;font-weight:400;transform:scaleY(1.08);transform-origin:0 12.09px;-webkit-text-stroke:0.15px #000;">archiviert</div>
<div class="t " style="left:1255.4px;top:122.12px;font-size:11.2px;color:#000;font-weight:400;transform:scaleY(1.08);transform-origin:0 11.88px;-webkit-text-stroke:0.15px #000;">07.07.2025, 17:06</div>
<div class="t " style="left:35.4px;top:141.26px;font-size:10.8px;color:#000;font-weight:400;transform:scaleY(1.08);transform-origin:0 11.74px;-webkit-text-stroke:0.15px #000;">7116885</div>
<div class="t " style="left:165.4px;top:140.91px;font-size:11.8px;color:#000;font-weight:400;transform:scaleY(1.08);transform-origin:0 12.09px;-webkit-text-stroke:0.15px #000;">UTILMD</div>
<div class="t " style="left:225.4px;top:140.91px;font-size:11.8px;color:#000;font-weight:400;transform:scaleY(1.08);transform-origin:0 12.09px;-webkit-text-stroke:0.15px #000;">Export</div>
<div class="t " style="left:285.4px;top:141.26px;font-size:10.8px;color:#000;font-weight:400;transform:scaleY(1.08);transform-origin:0 11.74px;-webkit-text-stroke:0.15px #000;">9900926000004</div>
<div class="t " style="left:380.4px;top:140.91px;font-size:11.8px;color:#000;font-weight:400;transform:scaleY(1.08);transform-origin:0 12.09px;-webkit-text-stroke:0.15px #000;">SWI_Netz</div>
<div class="t " style="left:530.4px;top:141.26px;font-size:10.8px;color:#000;font-weight:400;transform:scaleY(1.08);transform-origin:0 11.74px;-webkit-text-stroke:0.15px #000;">9911831000005</div>
<div class="t " style="left:630.4px;top:140.91px;font-size:11.8px;color:#000;font-weight:400;transform:scaleY(1.08);transform-origin:0 12.09px;-webkit-text-stroke:0.15px #000;">Vattenfall REES_Stro</div>
<div class="t " style="left:764.4px;top:141.26px;font-size:10.8px;color:#000;font-weight:400;transform:scaleY(1.08);transform-origin:0 11.74px;-webkit-text-stroke:0.15px #000;">55063</div>
<div class="t " style="left:824.4px;top:140.91px;font-size:11.8px;color:#000;font-weight:400;transform:scaleY(1.08);transform-origin:0 12.09px;-webkit-text-stroke:0.15px #000;">Deaktivierung von MaBiS-ZP</div>
<div class="t " style="left:1181.4px;top:140.91px;font-size:11.8px;color:#000;font-weight:400;transform:scaleY(1.08);transform-origin:0 12.09px;-webkit-text-stroke:0.15px #000;">unfertig</div>
<div class="t " style="left:1255.4px;top:141.12px;font-size:11.2px;color:#000;font-weight:400;transform:scaleY(1.08);transform-origin:0 11.88px;-webkit-text-stroke:0.15px #000;">07.07.2025, 17:06</div>
<div class="t " style="left:35.4px;top:160.26px;font-size:10.8px;color:#000;font-weight:400;transform:scaleY(1.08);transform-origin:0 11.74px;-webkit-text-stroke:0.15px #000;">7116883</div>
<div class="t " style="left:165.4px;top:159.91px;font-size:11.8px;color:#000;font-weight:400;transform:scaleY(1.08);transform-origin:0 12.09px;-webkit-text-stroke:0.15px #000;">UTILMD</div>
<div class="t " style="left:225.4px;top:159.91px;font-size:11.8px;color:#000;font-weight:400;transform:scaleY(1.08);transform-origin:0 12.09px;-webkit-text-stroke:0.15px #000;">Export</div>
<div class="t " style="left:285.4px;top:160.26px;font-size:10.8px;color:#000;font-weight:400;transform:scaleY(1.08);transform-origin:0 11.74px;-webkit-text-stroke:0.15px #000;">9900926000004</div>
<div class="t " style="left:380.4px;top:159.91px;font-size:11.8px;color:#000;font-weight:400;transform:scaleY(1.08);transform-origin:0 12.09px;-webkit-text-stroke:0.15px #000;">SWI_Netz</div>
<div class="t " style="left:530.4px;top:160.26px;font-size:10.8px;color:#000;font-weight:400;transform:scaleY(1.08);transform-origin:0 11.74px;-webkit-text-stroke:0.15px #000;">9907297000002</div>
<div class="t " style="left:630.4px;top:159.91px;font-size:11.8px;color:#000;font-weight:400;transform:scaleY(1.08);transform-origin:0 12.09px;-webkit-text-stroke:0.15px #000;">10YDE-VE-------2</div>
<div class="t " style="left:764.4px;top:160.26px;font-size:10.8px;color:#000;font-weight:400;transform:scaleY(1.08);transform-origin:0 11.74px;-webkit-text-stroke:0.15px #000;">55063</div>
<div class="t " style="left:824.4px;top:159.91px;font-size:11.8px;color:#000;font-weight:400;transform:scaleY(1.08);transform-origin:0 12.09px;-webkit-text-stroke:0.15px #000;">Deaktivierung von MaBiS-ZP</div>
<div class="t " style="left:1181.4px;top:159.91px;font-size:11.8px;color:#000;font-weight:400;transform:scaleY(1.08);transform-origin:0 12.09px;-webkit-text-stroke:0.15px #000;">archiviert</div>
<div class="t " style="left:1255.4px;top:160.12px;font-size:11.2px;color:#000;font-weight:400;transform:scaleY(1.08);transform-origin:0 11.88px;-webkit-text-stroke:0.15px #000;">07.07.2025, 17:06</div>
<div class="t " style="left:35.4px;top:179.26px;font-size:10.8px;color:#000;font-weight:400;transform:scaleY(1.08);transform-origin:0 11.74px;-webkit-text-stroke:0.15px #000;">7116881</div>
<div class="t " style="left:165.4px;top:178.91px;font-size:11.8px;color:#000;font-weight:400;transform:scaleY(1.08);transform-origin:0 12.09px;-webkit-text-stroke:0.15px #000;">UTILMD</div>
<div class="t " style="left:225.4px;top:178.91px;font-size:11.8px;color:#000;font-weight:400;transform:scaleY(1.08);transform-origin:0 12.09px;-webkit-text-stroke:0.15px #000;">Export</div>
<div class="t " style="left:285.4px;top:179.26px;font-size:10.8px;color:#000;font-weight:400;transform:scaleY(1.08);transform-origin:0 11.74px;-webkit-text-stroke:0.15px #000;">9900926000004</div>
<div class="t " style="left:380.4px;top:178.91px;font-size:11.8px;color:#000;font-weight:400;transform:scaleY(1.08);transform-origin:0 12.09px;-webkit-text-stroke:0.15px #000;">SWI_Netz</div>
<div class="t " style="left:530.4px;top:179.26px;font-size:10.8px;color:#000;font-weight:400;transform:scaleY(1.08);transform-origin:0 11.74px;-webkit-text-stroke:0.15px #000;">9907297000002</div>
<div class="t " style="left:630.4px;top:178.91px;font-size:11.8px;color:#000;font-weight:400;transform:scaleY(1.08);transform-origin:0 12.09px;-webkit-text-stroke:0.15px #000;">10YDE-VE-------2</div>
<div class="t " style="left:764.4px;top:179.26px;font-size:10.8px;color:#000;font-weight:400;transform:scaleY(1.08);transform-origin:0 11.74px;-webkit-text-stroke:0.15px #000;">55063</div>
<div class="t " style="left:824.4px;top:178.91px;font-size:11.8px;color:#000;font-weight:400;transform:scaleY(1.08);transform-origin:0 12.09px;-webkit-text-stroke:0.15px #000;">Deaktivierung von MaBiS-ZP</div>
<div class="t " style="left:1181.4px;top:178.91px;font-size:11.8px;color:#000;font-weight:400;transform:scaleY(1.08);transform-origin:0 12.09px;-webkit-text-stroke:0.15px #000;">archiviert</div>
<div class="t " style="left:1255.4px;top:179.12px;font-size:11.2px;color:#000;font-weight:400;transform:scaleY(1.08);transform-origin:0 11.88px;-webkit-text-stroke:0.15px #000;">07.07.2025, 17:06</div>
<div class="t " style="left:35.4px;top:198.26px;font-size:10.8px;color:#000;font-weight:400;transform:scaleY(1.08);transform-origin:0 11.74px;-webkit-text-stroke:0.15px #000;">7097081</div>
<div class="t " style="left:165.4px;top:197.91px;font-size:11.8px;color:#000;font-weight:400;transform:scaleY(1.08);transform-origin:0 12.09px;-webkit-text-stroke:0.15px #000;">UTILMD</div>
<div class="t " style="left:225.4px;top:197.91px;font-size:11.8px;color:#000;font-weight:400;transform:scaleY(1.08);transform-origin:0 12.09px;-webkit-text-stroke:0.15px #000;">Export</div>
<div class="t " style="left:285.4px;top:198.26px;font-size:10.8px;color:#000;font-weight:400;transform:scaleY(1.08);transform-origin:0 11.74px;-webkit-text-stroke:0.15px #000;">9900926000004</div>
<div class="t " style="left:380.4px;top:197.91px;font-size:11.8px;color:#000;font-weight:400;transform:scaleY(1.08);transform-origin:0 12.09px;-webkit-text-stroke:0.15px #000;">SWI_Netz</div>
<div class="t " style="left:530.4px;top:198.26px;font-size:10.8px;color:#000;font-weight:400;transform:scaleY(1.08);transform-origin:0 11.74px;-webkit-text-stroke:0.15px #000;">9907297000002</div>
<div class="t " style="left:630.4px;top:197.91px;font-size:11.8px;color:#000;font-weight:400;transform:scaleY(1.08);transform-origin:0 12.09px;-webkit-text-stroke:0.15px #000;">10YDE-VE-------2</div>
<div class="t " style="left:764.4px;top:198.26px;font-size:10.8px;color:#000;font-weight:400;transform:scaleY(1.08);transform-origin:0 11.74px;-webkit-text-stroke:0.15px #000;">55063</div>
<div class="t " style="left:824.4px;top:197.91px;font-size:11.8px;color:#000;font-weight:400;transform:scaleY(1.08);transform-origin:0 12.09px;-webkit-text-stroke:0.15px #000;">Deaktivierung von MaBiS-ZP</div>
<div class="t " style="left:1181.4px;top:197.91px;font-size:11.8px;color:#000;font-weight:400;transform:scaleY(1.08);transform-origin:0 12.09px;-webkit-text-stroke:0.15px #000;">gesendet</div>
<div class="t " style="left:1255.4px;top:198.12px;font-size:11.2px;color:#000;font-weight:400;transform:scaleY(1.08);transform-origin:0 11.88px;-webkit-text-stroke:0.15px #000;">18.06.2025, 11:24</div>
<div class="t " style="left:35.4px;top:217.26px;font-size:10.8px;color:#000;font-weight:400;transform:scaleY(1.08);transform-origin:0 11.74px;-webkit-text-stroke:0.15px #000;">7097080</div>
<div class="t " style="left:165.4px;top:216.91px;font-size:11.8px;color:#000;font-weight:400;transform:scaleY(1.08);transform-origin:0 12.09px;-webkit-text-stroke:0.15px #000;">UTILMD</div>
<div class="t " style="left:225.4px;top:216.91px;font-size:11.8px;color:#000;font-weight:400;transform:scaleY(1.08);transform-origin:0 12.09px;-webkit-text-stroke:0.15px #000;">Export</div>
<div class="t " style="left:285.4px;top:217.26px;font-size:10.8px;color:#000;font-weight:400;transform:scaleY(1.08);transform-origin:0 11.74px;-webkit-text-stroke:0.15px #000;">9900926000004</div>
<div class="t " style="left:380.4px;top:216.91px;font-size:11.8px;color:#000;font-weight:400;transform:scaleY(1.08);transform-origin:0 12.09px;-webkit-text-stroke:0.15px #000;">SWI_Netz</div>
<div class="t " style="left:530.4px;top:217.26px;font-size:10.8px;color:#000;font-weight:400;transform:scaleY(1.08);transform-origin:0 11.74px;-webkit-text-stroke:0.15px #000;">9907297000002</div>
<div class="t " style="left:630.4px;top:216.91px;font-size:11.8px;color:#000;font-weight:400;transform:scaleY(1.08);transform-origin:0 12.09px;-webkit-text-stroke:0.15px #000;">10YDE-VE-------2</div>
<div class="t " style="left:764.4px;top:217.26px;font-size:10.8px;color:#000;font-weight:400;transform:scaleY(1.08);transform-origin:0 11.74px;-webkit-text-stroke:0.15px #000;">55063</div>
<div class="t " style="left:824.4px;top:216.91px;font-size:11.8px;color:#000;font-weight:400;transform:scaleY(1.08);transform-origin:0 12.09px;-webkit-text-stroke:0.15px #000;">Deaktivierung von MaBiS-ZP</div>
<div class="t " style="left:1181.4px;top:216.91px;font-size:11.8px;color:#000;font-weight:400;transform:scaleY(1.08);transform-origin:0 12.09px;-webkit-text-stroke:0.15px #000;">gesendet</div>
<div class="t " style="left:1255.4px;top:217.12px;font-size:11.2px;color:#000;font-weight:400;transform:scaleY(1.08);transform-origin:0 11.88px;-webkit-text-stroke:0.15px #000;">18.06.2025, 11:24</div>
</div>
<div class="r" style="left:1361px;top:131px;width:16px;height:236px;background:#f0f0f0;"></div>
<div class="r" style="left:1361px;top:148px;width:15px;height:43px;background:#cdcdcd;"></div>
<svg class="r" style="left:1364px;top:136px;" width="10" height="9" viewBox="0 0 10 9"><path d="M1.2 6.8 L4.5 3 L7.8 6.8" fill="none" stroke="#505050" stroke-width="2.1"/></svg>
<svg class="r" style="left:1364px;top:354px;" width="10" height="9" viewBox="0 0 10 9"><path d="M1.2 1.2 L4.5 5 L7.8 1.2" fill="none" stroke="#505050" stroke-width="2.1"/></svg>
<div class="r" style="left:21px;top:367px;width:1356px;height:16px;background:#f0f0f0;"></div>
<div class="r" style="left:39px;top:367px;width:1102px;height:15px;background:#cdcdcd;"></div>
<svg class="r" style="left:26px;top:370px;" width="9" height="10" viewBox="0 0 9 10"><path d="M6.8 1.2 L3 4.5 L6.8 7.8" fill="none" stroke="#505050" stroke-width="2.1"/></svg>
<svg class="r" style="left:1348px;top:370px;" width="9" height="10" viewBox="0 0 9 10"><path d="M1.2 1.2 L5 4.5 L1.2 7.8" fill="none" stroke="#505050" stroke-width="2.1"/></svg>
<svg class="r" style="left:25px;top:390px;" width="14" height="13" viewBox="0 0 14 13"><rect x="0.5" y="0.5" width="2.5" height="11" fill="#f4f4f4" stroke="#a8a8a8"/><path d="M11.5 0.5 L5 6 L11.5 11.5z" fill="#e8e8e8" stroke="#a8a8a8"/></svg>
<svg class="r" style="left:49px;top:390px;" width="9" height="13" viewBox="0 0 9 13"><path d="M7.5 0.5 L1 6 L7.5 11.5z" fill="#e8e8e8" stroke="#a8a8a8"/></svg>
<svg class="r" style="left:72px;top:390px;" width="9" height="13" viewBox="0 0 9 13"><path d="M1 0.5 L7.5 6 L1 11.5z" fill="#8cc2ee" stroke="#3a86d0"/></svg>
<svg class="r" style="left:93px;top:390px;" width="14" height="13" viewBox="0 0 14 13"><path d="M1 0.5 L7.5 6 L1 11.5z" fill="#8cc2ee" stroke="#3a86d0"/><rect x="9.5" y="0.5" width="2.5" height="11" fill="#8cc2ee" stroke="#3a86d0"/></svg>
<div class="t " style="left:119px;top:388.08px;font-size:11.3px;color:#000;font-weight:400;transform:scaleY(1.08);transform-origin:0 11.92px;-webkit-text-stroke:0.15px #000;">1 - 50 (Gesamt: 274)</div>
<div class="r" style="left:21px;top:417px;width:26px;height:24px;background:#e1e1e1;border:1px solid #adadad;"></div>
<svg class="r" style="left:25px;top:421px;" width="18" height="16" viewBox="0 0 18 16"><circle cx="9" cy="8" r="7" fill="#5aa81e"/><circle cx="9" cy="7.5" r="6" fill="#7cc431"/><rect x="5" y="6.7" width="8" height="2.6" fill="#fff"/><rect x="7.7" y="4" width="2.6" height="8" fill="#fff"/></svg>
<div class="r" style="left:57px;top:417px;width:26px;height:24px;background:#e1e1e1;border:1px solid #adadad;"></div>
<svg class="r" style="left:61px;top:421px;" width="18" height="16" viewBox="0 0 18 16"><rect x="2.5" y="1.5" width="10" height="8" fill="#cfe6f8" stroke="#1c78c8" stroke-width="1.3"/><rect x="5.5" y="5.5" width="10" height="9" fill="#f4f9fd" stroke="#1c78c8" stroke-width="1.3"/><rect x="5.5" y="5.5" width="10" height="2.5" fill="#1c78c8"/></svg>
<div class="r" style="left:93px;top:417px;width:26px;height:24px;background:#cccccc;border:1px solid #bfbfbf;"></div>
<svg class="r" style="left:97px;top:421px;" width="18" height="16" viewBox="0 0 18 16"><circle cx="9" cy="8" r="7" fill="#b5b5b5"/><path d="M4.3 5.5 A5.5 5.5 0 0 1 13.7 5.5" fill="none" stroke="#d8d8d8" stroke-width=".9" stroke-dasharray="1.4 1.4"/><rect x="5" y="6.8" width="8" height="2.4" fill="#dadada"/></svg>
<div class="r" style="left:129px;top:417px;width:26px;height:24px;background:#cccccc;border:1px solid #bfbfbf;"></div>
<svg class="r" style="left:133px;top:421px;" width="18" height="16" viewBox="0 0 18 16"><path d="M5 3.5 H11.5 A4.2 4.2 0 0 1 11.5 11.9 H6.5" fill="none" stroke="#b5b5b5" stroke-width="3.4"/><path d="M5.5 3.5 H12 M7 11.9 H11.5" stroke="#dadada" stroke-width=".9"/><path d="M1.5 12 L6.5 8 L6.5 16z" fill="#b5b5b5"/></svg>
<div class="r" style="left:12px;top:450px;width:1375px;height:3px;background:#a9a9a9;"></div>
<div class="r" style="left:12px;top:453px;width:1375px;height:28px;background:linear-gradient(#fdfeff,#e9f0fb);"></div>
<div class="r" style="left:12px;top:480px;width:1375px;height:1px;background:#ebebeb;"></div>
<div class="t " style="left:18.5px;top:458.88px;font-size:11.9px;color:#0f74dc;font-weight:700;transform:scaleY(1.08);transform-origin:0 12.12px;-webkit-text-stroke:0.05px #0f74dc;">Details: UTILMD | 7116893 | Deaktivierung von MaBiS-ZP</div>
<svg class="r" style="left:1363px;top:463.5px;" width="11" height="8" viewBox="0 0 11 8"><path d="M1.7 1.9 H9.3 Q9.9 1.9 9.6 2.6 L5.5 6.4 L1.4 2.6 Q1.1 1.9 1.7 1.9z" fill="#d8dadc" stroke="#585858" stroke-width="1.25" stroke-linejoin="round"/></svg>
<div class="r" style="left:20px;top:490px;width:1359px;height:400px;border:1px solid #a5a5a5;"></div>
<div class="r" style="left:158px;top:491px;width:1px;height:12px;background:#a0a0a0;"></div>
<div class="r" style="left:22px;top:502px;width:137px;height:1px;background:#a0a0a0;"></div>
<div class="t " style="left:29.6px;top:504.91px;font-size:11.8px;color:#000;font-weight:700;transform:scaleY(1.08);transform-origin:0 12.09px;-webkit-text-stroke:0.05px #000;">Daten der Nachricht</div>
<div class="r" style="left:22px;top:524px;width:136px;height:1px;background:#a0a0a0;"></div>
<div class="r" style="left:22px;top:526px;width:136px;height:19px;background:linear-gradient(#dddccc,#cccbbb);"></div>
<div class="t " style="left:29.6px;top:526.91px;font-size:11.8px;color:#000;font-weight:400;transform:scaleY(1.08);transform-origin:0 12.09px;-webkit-text-stroke:0.15px #000;">Prozess-Nachrichten</div>
<div class="r" style="left:22px;top:546px;width:136px;height:1px;background:#a0a0a0;"></div>
<div class="r" style="left:22px;top:548px;width:136px;height:19px;background:linear-gradient(#dddccc,#cccbbb);"></div>
<div class="t " style="left:29.6px;top:548.91px;font-size:11.8px;color:#000;font-weight:400;transform:scaleY(1.08);transform-origin:0 12.09px;-webkit-text-stroke:0.15px #000;">Prozess-Visualisierung</div>
<div class="r" style="left:22px;top:568px;width:136px;height:1px;background:#a0a0a0;"></div>
<div class="r" style="left:22px;top:570px;width:136px;height:19px;background:linear-gradient(#dddccc,#cccbbb);"></div>
<div class="t " style="left:29.6px;top:570.91px;font-size:11.8px;color:#000;font-weight:400;transform:scaleY(1.08);transform-origin:0 12.09px;-webkit-text-stroke:0.15px #000;">Status-Historie</div>
<div class="r" style="left:22px;top:590px;width:136px;height:1px;background:#a0a0a0;"></div>
<div class="r" style="left:22px;top:592px;width:136px;height:19px;background:linear-gradient(#dddccc,#cccbbb);"></div>
<div class="t " style="left:29.6px;top:592.91px;font-size:11.8px;color:#000;font-weight:400;transform:scaleY(1.08);transform-origin:0 12.09px;-webkit-text-stroke:0.15px #000;">Datei-Inhalt</div>
<div class="r" style="left:22px;top:612px;width:136px;height:1px;background:#a0a0a0;"></div>
<div class="r" style="left:22px;top:613px;width:136px;height:2px;background:linear-gradient(#e6e6e6,#f8f8f8);"></div>
<div class="r" style="left:158px;top:524px;width:1px;height:350px;background:#a0a0a0;"></div>
<div class="r" style="left:174px;top:501px;width:26px;height:24px;background:#e1e1e1;border:1px solid #adadad;"></div>
<svg class="r" style="left:178px;top:505px;" width="18" height="16" viewBox="0 0 18 16"><path d="M7.2 4.2 V11.8" stroke="#1f5fc8" stroke-width="1.7" stroke-linecap="round"/><path d="M12.4 4.2 L8.3 8 L12.4 11.8z" fill="#dce8f8" stroke="#1f5fc8" stroke-width="1.3" stroke-linejoin="round"/></svg>
<div class="r" style="left:210px;top:501px;width:26px;height:24px;background:#e1e1e1;border:1px solid #adadad;"></div>
<svg class="r" style="left:214px;top:505px;" width="18" height="16" viewBox="0 0 18 16"><path d="M7.4 4.2 L11.6 8 L7.4 11.8z" fill="#dce8f8" stroke="#1f5fc8" stroke-width="1.3" stroke-linejoin="round"/></svg>
<div class="r" style="left:245px;top:500px;width:1124px;height:20px;border:1px solid #a5a5a5;background:#fff;"></div>
<svg class="r" style="left:1350px;top:501px;" width="18" height="18" viewBox="0 0 18 18"><path d="M1.5 2 H16.5 L11 9 V16 L8 14 V9z" fill="#7ec3ee" stroke="#2d86d1" stroke-width="1.2" stroke-linejoin="round"/><ellipse cx="9" cy="3" rx="7" ry="1.5" fill="#d9efff"/></svg>
<div class="r" style="left:173px;top:535px;width:1196px;height:281px;border:1px solid #6b6b6b;background:#fff;"></div>
<div class="r" style="left:473px;top:536px;width:1px;height:24px;background:#e5e5e5;"></div>
<div class="r" style="left:501px;top:536px;width:1px;height:24px;background:#e5e5e5;"></div>
<div class="r" style="left:521px;top:536px;width:1px;height:24px;background:#e5e5e5;"></div>
<div class="r" style="left:821px;top:536px;width:1px;height:24px;background:#e5e5e5;"></div>
<div class="r" style="left:849px;top:536px;width:1px;height:24px;background:#e5e5e5;"></div>
<div class="r" style="left:1149px;top:536px;width:1px;height:24px;background:#e5e5e5;"></div>
<div class="r" style="left:1249px;top:536px;width:1px;height:24px;background:#e5e5e5;"></div>
<div class="t " style="left:180.3px;top:539.91px;font-size:11.8px;color:#000;font-weight:400;transform:scaleY(1.08);transform-origin:0 12.09px;-webkit-text-stroke:0.15px #000;">Feldbezeichnung</div>
<div class="t " style="left:479.8px;top:539.91px;font-size:11.8px;color:#000;font-weight:400;transform:scaleY(1.08);transform-origin:0 12.09px;-webkit-text-stroke:0.15px #000;">BS</div>
<div class="t " style="left:508.2px;top:539.91px;font-size:11.8px;color:#000;font-weight:400;transform:scaleY(1.08);transform-origin:0 12.09px;-webkit-text-stroke:0.15px #000;">></div>
<div class="t " style="left:528.1px;top:539.91px;font-size:11.8px;color:#000;font-weight:400;transform:scaleY(1.08);transform-origin:0 12.09px;-webkit-text-stroke:0.15px #000;">Feldinhalt (Nachricht)</div>
<div class="t " style="left:827.8px;top:539.91px;font-size:11.8px;color:#000;font-weight:400;transform:scaleY(1.08);transform-origin:0 12.09px;-webkit-text-stroke:0.15px #000;">AB</div>
<div class="t " style="left:856.2px;top:539.91px;font-size:11.8px;color:#000;font-weight:400;transform:scaleY(1.08);transform-origin:0 12.09px;-webkit-text-stroke:0.15px #000;">Feldinhalt (Stammdaten)</div>
<div class="t " style="left:1156.25px;top:539.91px;font-size:11.8px;color:#000;font-weight:400;transform:scaleY(1.08);transform-origin:0 12.09px;-webkit-text-stroke:0.15px #000;">EDI-Code</div>
<div class="r" style="left:174px;top:560px;width:1194px;height:18px;background:#d9d9d9;"></div>
<div class="r" style="left:473px;top:560px;width:1px;height:18px;background:#e6e6e6;"></div>
<div class="r" style="left:501px;top:560px;width:1px;height:18px;background:#e6e6e6;"></div>
<div class="r" style="left:521px;top:560px;width:1px;height:18px;background:#e6e6e6;"></div>
<div class="r" style="left:821px;top:560px;width:1px;height:18px;background:#e6e6e6;"></div>
<div class="r" style="left:849px;top:560px;width:1px;height:18px;background:#e6e6e6;"></div>
<div class="r" style="left:1149px;top:560px;width:1px;height:18px;background:#e6e6e6;"></div>
<div class="r" style="left:1249px;top:560px;width:1px;height:18px;background:#e6e6e6;"></div>
<svg class="r" style="left:179px;top:564px;" width="10" height="12" viewBox="0 0 10 12"><path d="M3.5 2.5 L7.8 6.5 L3.5 10.5" fill="none" stroke="#8a8a8a" stroke-width="1.7"/></svg>
<div class="t " style="left:195.2px;top:560.91px;font-size:11.8px;color:#000;font-weight:400;transform:scaleY(1.08);transform-origin:0 12.09px;-webkit-text-stroke:0.15px #000;">Interne Meldung</div>
<div class="r" style="left:174px;top:595px;width:1194px;height:1px;background:#e4e4e4;"></div>
<div class="r" style="left:473px;top:578px;width:1px;height:18px;background:#e4e4e4;"></div>
<div class="r" style="left:501px;top:578px;width:1px;height:18px;background:#e4e4e4;"></div>
<div class="r" style="left:521px;top:578px;width:1px;height:18px;background:#e4e4e4;"></div>
<div class="r" style="left:821px;top:578px;width:1px;height:18px;background:#e4e4e4;"></div>
<div class="r" style="left:849px;top:578px;width:1px;height:18px;background:#e4e4e4;"></div>
<div class="r" style="left:1149px;top:578px;width:1px;height:18px;background:#e4e4e4;"></div>
<div class="r" style="left:1249px;top:578px;width:1px;height:18px;background:#e4e4e4;"></div>
<svg class="r" style="left:179px;top:582px;" width="11" height="10" viewBox="0 0 11 10"><path d="M1.5 3.5 L5.6 7.8 L9.7 3.5" fill="none" stroke="#404040" stroke-width="1.8"/></svg>
<div class="t " style="left:195.2px;top:578.91px;font-size:11.8px;color:#000;font-weight:400;transform:scaleY(1.08);transform-origin:0 12.09px;-webkit-text-stroke:0.15px #000;">Kunde/Verbrauchsstelle</div>
<div class="t " style="left:507.5px;top:579.36px;font-size:10.5px;color:#000;font-weight:400;transform:scaleY(1.08);transform-origin:0 11.64px;-webkit-text-stroke:0.15px #000;">&gt;</div>
<div class="r" style="left:174px;top:613px;width:1194px;height:1px;background:#e4e4e4;"></div>
<div class="r" style="left:473px;top:596px;width:1px;height:18px;background:#e4e4e4;"></div>
<div class="r" style="left:501px;top:596px;width:1px;height:18px;background:#e4e4e4;"></div>
<div class="r" style="left:521px;top:596px;width:1px;height:18px;background:#e4e4e4;"></div>
<div class="r" style="left:821px;top:596px;width:1px;height:18px;background:#e4e4e4;"></div>
<div class="r" style="left:849px;top:596px;width:1px;height:18px;background:#e4e4e4;"></div>
<div class="r" style="left:1149px;top:596px;width:1px;height:18px;background:#e4e4e4;"></div>
<div class="r" style="left:1249px;top:596px;width:1px;height:18px;background:#e4e4e4;"></div>
<div class="t " style="left:211.4px;top:596.91px;font-size:11.8px;color:#000;font-weight:400;transform:scaleY(1.08);transform-origin:0 12.09px;-webkit-text-stroke:0.15px #000;">Kunde der Nachricht</div>
<div class="r" style="left:174px;top:631px;width:1194px;height:1px;background:#e4e4e4;"></div>
<div class="r" style="left:473px;top:614px;width:1px;height:18px;background:#e4e4e4;"></div>
<div class="r" style="left:501px;top:614px;width:1px;height:18px;background:#e4e4e4;"></div>
<div class="r" style="left:521px;top:614px;width:1px;height:18px;background:#e4e4e4;"></div>
<div class="r" style="left:821px;top:614px;width:1px;height:18px;background:#e4e4e4;"></div>
<div class="r" style="left:849px;top:614px;width:1px;height:18px;background:#e4e4e4;"></div>
<div class="r" style="left:1149px;top:614px;width:1px;height:18px;background:#e4e4e4;"></div>
<div class="r" style="left:1249px;top:614px;width:1px;height:18px;background:#e4e4e4;"></div>
<div class="t " style="left:211.4px;top:614.91px;font-size:11.8px;color:#000;font-weight:400;transform:scaleY(1.08);transform-origin:0 12.09px;-webkit-text-stroke:0.15px #000;">Verbrauchsstelle der Nachricht</div>
<div class="r" style="left:174px;top:649px;width:1194px;height:1px;background:#e4e4e4;"></div>
<div class="r" style="left:473px;top:632px;width:1px;height:18px;background:#e4e4e4;"></div>
<div class="r" style="left:501px;top:632px;width:1px;height:18px;background:#e4e4e4;"></div>
<div class="r" style="left:521px;top:632px;width:1px;height:18px;background:#e4e4e4;"></div>
<div class="r" style="left:821px;top:632px;width:1px;height:18px;background:#e4e4e4;"></div>
<div class="r" style="left:849px;top:632px;width:1px;height:18px;background:#e4e4e4;"></div>
<div class="r" style="left:1149px;top:632px;width:1px;height:18px;background:#e4e4e4;"></div>
<div class="r" style="left:1249px;top:632px;width:1px;height:18px;background:#e4e4e4;"></div>
<svg class="r" style="left:179px;top:636px;" width="10" height="12" viewBox="0 0 10 12"><path d="M3.5 2.5 L7.8 6.5 L3.5 10.5" fill="none" stroke="#8a8a8a" stroke-width="1.7"/></svg>
<div class="t " style="left:195.2px;top:632.91px;font-size:11.8px;color:#000;font-weight:400;transform:scaleY(1.08);transform-origin:0 12.09px;-webkit-text-stroke:0.15px #000;">Allgemein</div>
<div class="r" style="left:174px;top:667px;width:1194px;height:1px;background:#e4e4e4;"></div>
<div class="r" style="left:473px;top:650px;width:1px;height:18px;background:#e4e4e4;"></div>
<div class="r" style="left:501px;top:650px;width:1px;height:18px;background:#e4e4e4;"></div>
<div class="r" style="left:521px;top:650px;width:1px;height:18px;background:#e4e4e4;"></div>
<div class="r" style="left:821px;top:650px;width:1px;height:18px;background:#e4e4e4;"></div>
<div class="r" style="left:849px;top:650px;width:1px;height:18px;background:#e4e4e4;"></div>
<div class="r" style="left:1149px;top:650px;width:1px;height:18px;background:#e4e4e4;"></div>
<div class="r" style="left:1249px;top:650px;width:1px;height:18px;background:#e4e4e4;"></div>
<svg class="r" style="left:179px;top:654px;" width="10" height="12" viewBox="0 0 10 12"><path d="M3.5 2.5 L7.8 6.5 L3.5 10.5" fill="none" stroke="#8a8a8a" stroke-width="1.7"/></svg>
<div class="t " style="left:195.2px;top:650.91px;font-size:11.8px;color:#000;font-weight:400;transform:scaleY(1.08);transform-origin:0 12.09px;-webkit-text-stroke:0.15px #000;">Absender (Netzbetreiber)</div>
<div class="t " style="left:507.5px;top:651.36px;font-size:10.5px;color:#000;font-weight:400;transform:scaleY(1.08);transform-origin:0 11.64px;-webkit-text-stroke:0.15px #000;">&gt;</div>
<div class="t " style="left:527.5px;top:650.91px;font-size:11.8px;color:#000;font-weight:400;transform:scaleY(1.08);transform-origin:0 12.09px;-webkit-text-stroke:0.15px #000;">SWI_Netz</div>
<div class="t " style="left:1155.5px;top:651.26px;font-size:10.8px;color:#000;font-weight:400;transform:scaleY(1.08);transform-origin:0 11.74px;-webkit-text-stroke:0.15px #000;">9900926000004</div>
<div class="r" style="left:174px;top:685px;width:1194px;height:1px;background:#e4e4e4;"></div>
<div class="r" style="left:473px;top:668px;width:1px;height:18px;background:#e4e4e4;"></div>
<div class="r" style="left:501px;top:668px;width:1px;height:18px;background:#e4e4e4;"></div>
<div class="r" style="left:521px;top:668px;width:1px;height:18px;background:#e4e4e4;"></div>
<div class="r" style="left:821px;top:668px;width:1px;height:18px;background:#e4e4e4;"></div>
<div class="r" style="left:849px;top:668px;width:1px;height:18px;background:#e4e4e4;"></div>
<div class="r" style="left:1149px;top:668px;width:1px;height:18px;background:#e4e4e4;"></div>
<div class="r" style="left:1249px;top:668px;width:1px;height:18px;background:#e4e4e4;"></div>
<div class="t " style="left:195.2px;top:668.91px;font-size:11.8px;color:#000;font-weight:400;transform:scaleY(1.08);transform-origin:0 12.09px;-webkit-text-stroke:0.15px #000;">Empfänger (Bilanzkoordinator)</div>
<div class="t " style="left:507.5px;top:669.36px;font-size:10.5px;color:#000;font-weight:400;transform:scaleY(1.08);transform-origin:0 11.64px;-webkit-text-stroke:0.15px #000;">&gt;</div>
<div class="t " style="left:527.5px;top:668.91px;font-size:11.8px;color:#000;font-weight:400;transform:scaleY(1.08);transform-origin:0 12.09px;-webkit-text-stroke:0.15px #000;">10YDE-VE-------2</div>
<div class="t " style="left:1155.5px;top:669.26px;font-size:10.8px;color:#000;font-weight:400;transform:scaleY(1.08);transform-origin:0 11.74px;-webkit-text-stroke:0.15px #000;">9907297000002</div>
<div class="r" style="left:174px;top:703px;width:1194px;height:1px;background:#e4e4e4;"></div>
<div class="r" style="left:473px;top:686px;width:1px;height:18px;background:#e4e4e4;"></div>
<div class="r" style="left:501px;top:686px;width:1px;height:18px;background:#e4e4e4;"></div>
<div class="r" style="left:521px;top:686px;width:1px;height:18px;background:#e4e4e4;"></div>
<div class="r" style="left:821px;top:686px;width:1px;height:18px;background:#e4e4e4;"></div>
<div class="r" style="left:849px;top:686px;width:1px;height:18px;background:#e4e4e4;"></div>
<div class="r" style="left:1149px;top:686px;width:1px;height:18px;background:#e4e4e4;"></div>
<div class="r" style="left:1249px;top:686px;width:1px;height:18px;background:#e4e4e4;"></div>
<svg class="r" style="left:179px;top:690px;" width="11" height="10" viewBox="0 0 11 10"><path d="M1.5 3.5 L5.6 7.8 L9.7 3.5" fill="none" stroke="#404040" stroke-width="1.8"/></svg>
<div class="t " style="left:195.2px;top:686.91px;font-size:11.8px;color:#000;font-weight:400;transform:scaleY(1.08);transform-origin:0 12.09px;-webkit-text-stroke:0.15px #000;">Vorgang</div>
<div class="r" style="left:174px;top:721px;width:1194px;height:1px;background:#e4e4e4;"></div>
<div class="r" style="left:473px;top:704px;width:1px;height:18px;background:#e4e4e4;"></div>
<div class="r" style="left:501px;top:704px;width:1px;height:18px;background:#e4e4e4;"></div>
<div class="r" style="left:521px;top:704px;width:1px;height:18px;background:#e4e4e4;"></div>
<div class="r" style="left:821px;top:704px;width:1px;height:18px;background:#e4e4e4;"></div>
<div class="r" style="left:849px;top:704px;width:1px;height:18px;background:#e4e4e4;"></div>
<div class="r" style="left:1149px;top:704px;width:1px;height:18px;background:#e4e4e4;"></div>
<div class="r" style="left:1249px;top:704px;width:1px;height:18px;background:#e4e4e4;"></div>
<div class="t " style="left:211.4px;top:704.91px;font-size:11.8px;color:#000;font-weight:400;transform:scaleY(1.08);transform-origin:0 12.09px;-webkit-text-stroke:0.15px #000;">Kategorie</div>
<div class="t " style="left:527.5px;top:704.91px;font-size:11.8px;color:#000;font-weight:400;transform:scaleY(1.08);transform-origin:0 12.09px;-webkit-text-stroke:0.15px #000;">Aktivierung/Deaktivierung von MaBiS-ZP</div>
<div class="t " style="left:1155.5px;top:705.26px;font-size:10.8px;color:#000;font-weight:400;transform:scaleY(1.08);transform-origin:0 11.74px;-webkit-text-stroke:0.15px #000;">Z07</div>
<div class="r" style="left:174px;top:739px;width:1194px;height:1px;background:#e4e4e4;"></div>
<div class="r" style="left:473px;top:722px;width:1px;height:18px;background:#e4e4e4;"></div>
<div class="r" style="left:501px;top:722px;width:1px;height:18px;background:#e4e4e4;"></div>
<div class="r" style="left:521px;top:722px;width:1px;height:18px;background:#e4e4e4;"></div>
<div class="r" style="left:821px;top:722px;width:1px;height:18px;background:#e4e4e4;"></div>
<div class="r" style="left:849px;top:722px;width:1px;height:18px;background:#e4e4e4;"></div>
<div class="r" style="left:1149px;top:722px;width:1px;height:18px;background:#e4e4e4;"></div>
<div class="r" style="left:1249px;top:722px;width:1px;height:18px;background:#e4e4e4;"></div>
<div class="t " style="left:211.4px;top:722.91px;font-size:11.8px;color:#000;font-weight:400;transform:scaleY(1.08);transform-origin:0 12.09px;-webkit-text-stroke:0.15px #000;">Bilanzierungsende</div>
<div class="t " style="left:527.5px;top:723.26px;font-size:10.8px;color:#000;font-weight:400;transform:scaleY(1.08);transform-origin:0 11.74px;-webkit-text-stroke:0.15px #000;">31.05.2025</div>
<div class="r" style="left:174px;top:757px;width:1194px;height:1px;background:#e4e4e4;"></div>
<div class="r" style="left:473px;top:740px;width:1px;height:18px;background:#e4e4e4;"></div>
<div class="r" style="left:501px;top:740px;width:1px;height:18px;background:#e4e4e4;"></div>
<div class="r" style="left:521px;top:740px;width:1px;height:18px;background:#e4e4e4;"></div>
<div class="r" style="left:821px;top:740px;width:1px;height:18px;background:#e4e4e4;"></div>
<div class="r" style="left:849px;top:740px;width:1px;height:18px;background:#e4e4e4;"></div>
<div class="r" style="left:1149px;top:740px;width:1px;height:18px;background:#e4e4e4;"></div>
<div class="r" style="left:1249px;top:740px;width:1px;height:18px;background:#e4e4e4;"></div>
<div class="t " style="left:211.4px;top:740.91px;font-size:11.8px;color:#000;font-weight:400;transform:scaleY(1.08);transform-origin:0 12.09px;-webkit-text-stroke:0.15px #000;">MaBiS-Zählpunkt</div>
<div class="t " style="left:507.5px;top:741.36px;font-size:10.5px;color:#000;font-weight:400;transform:scaleY(1.08);transform-origin:0 11.64px;-webkit-text-stroke:0.15px #000;">&gt;</div>
<div class="t " style="left:527.5px;top:741.26px;font-size:10.8px;color:#000;font-weight:400;transform:scaleY(1.08);transform-origin:0 11.74px;-webkit-text-stroke:0.15px #000;">DE00092698693TMSBKSLS000000868038</div>
<div class="r" style="left:174px;top:775px;width:1194px;height:1px;background:#e4e4e4;"></div>
<div class="r" style="left:473px;top:758px;width:1px;height:18px;background:#e4e4e4;"></div>
<div class="r" style="left:501px;top:758px;width:1px;height:18px;background:#e4e4e4;"></div>
<div class="r" style="left:521px;top:758px;width:1px;height:18px;background:#e4e4e4;"></div>
<div class="r" style="left:821px;top:758px;width:1px;height:18px;background:#e4e4e4;"></div>
<div class="r" style="left:849px;top:758px;width:1px;height:18px;background:#e4e4e4;"></div>
<div class="r" style="left:1149px;top:758px;width:1px;height:18px;background:#e4e4e4;"></div>
<div class="r" style="left:1249px;top:758px;width:1px;height:18px;background:#e4e4e4;"></div>
<div class="t " style="left:211.4px;top:758.91px;font-size:11.8px;color:#000;font-weight:400;transform:scaleY(1.08);transform-origin:0 12.09px;-webkit-text-stroke:0.15px #000;">Interner Hinweis</div>
<div class="r" style="left:174px;top:793px;width:1194px;height:1px;background:#e4e4e4;"></div>
<div class="r" style="left:473px;top:776px;width:1px;height:18px;background:#e4e4e4;"></div>
<div class="r" style="left:501px;top:776px;width:1px;height:18px;background:#e4e4e4;"></div>
<div class="r" style="left:521px;top:776px;width:1px;height:18px;background:#e4e4e4;"></div>
<div class="r" style="left:821px;top:776px;width:1px;height:18px;background:#e4e4e4;"></div>
<div class="r" style="left:849px;top:776px;width:1px;height:18px;background:#e4e4e4;"></div>
<div class="r" style="left:1149px;top:776px;width:1px;height:18px;background:#e4e4e4;"></div>
<div class="r" style="left:1249px;top:776px;width:1px;height:18px;background:#e4e4e4;"></div>
<div class="t " style="left:195.2px;top:776.91px;font-size:11.8px;color:#000;font-weight:400;transform:scaleY(1.08);transform-origin:0 12.09px;-webkit-text-stroke:0.15px #000;">Kommunikationszusätze</div>
<div class="r" style="left:174px;top:811px;width:1194px;height:1px;background:#e4e4e4;"></div>
<div class="r" style="left:473px;top:794px;width:1px;height:18px;background:#e4e4e4;"></div>
<div class="r" style="left:501px;top:794px;width:1px;height:18px;background:#e4e4e4;"></div>
<div class="r" style="left:521px;top:794px;width:1px;height:18px;background:#e4e4e4;"></div>
<div class="r" style="left:821px;top:794px;width:1px;height:18px;background:#e4e4e4;"></div>
<div class="r" style="left:849px;top:794px;width:1px;height:18px;background:#e4e4e4;"></div>
<div class="r" style="left:1149px;top:794px;width:1px;height:18px;background:#e4e4e4;"></div>
<div class="r" style="left:1249px;top:794px;width:1px;height:18px;background:#e4e4e4;"></div>
<div class="r" style="left:174px;top:826px;width:26px;height:24px;background:#cccccc;border:1px solid #bfbfbf;"></div>
<div class="r" style="left:210px;top:826px;width:26px;height:24px;background:#cccccc;border:1px solid #bfbfbf;"></div>
<div class="r" style="left:246px;top:826px;width:26px;height:24px;background:#cccccc;border:1px solid #bfbfbf;"></div>
<div class="r" style="left:282px;top:826px;width:26px;height:24px;background:#cccccc;border:1px solid #bfbfbf;"></div>
<svg class="r" style="left:178px;top:830px;" width="18" height="16" viewBox="0 0 18 16"><rect x="2.8" y="2" width="7" height="4.2" rx=".6" fill="#e2e2e2" stroke="#b5b5b5" stroke-width="1"/><path d="M4.9 6.2 V13.5 M4.9 9.7 H9" stroke="#b5b5b5" stroke-width="1"/><circle cx="11.5" cy="9.8" r="3.4" fill="#b5b5b5"/><path d="M9.4 9.8 H13.6 M11.5 7.7 V11.9" stroke="#e6e6e6" stroke-width="1"/></svg>
<svg class="r" style="left:214px;top:830px;" width="18" height="16" viewBox="0 0 18 16"><rect x="2" y="1.5" width="11.5" height="9.5" rx=".8" fill="#e0e0e0" stroke="#b5b5b5" stroke-width="1.1"/><rect x="3.5" y="3" width="8.5" height="1.6" fill="#b5b5b5"/><rect x="5" y="5.5" width="11.5" height="9.5" rx=".8" fill="#e0e0e0" stroke="#b5b5b5" stroke-width="1.1"/><rect x="6.5" y="7" width="8.5" height="1.6" fill="#b5b5b5"/></svg>
<svg class="r" style="left:250px;top:830px;" width="18" height="16" viewBox="0 0 18 16"><circle cx="9" cy="8" r="7" fill="#b5b5b5"/><path d="M4.3 5.5 A5.5 5.5 0 0 1 13.7 5.5" fill="none" stroke="#d8d8d8" stroke-width=".9" stroke-dasharray="1.4 1.4"/><rect x="5" y="6.8" width="8" height="2.4" fill="#dadada"/></svg>
<svg class="r" style="left:286px;top:830px;" width="18" height="16" viewBox="0 0 18 16"><path d="M5 3.5 H11.5 A4.2 4.2 0 0 1 11.5 11.9 H6.5" fill="none" stroke="#b5b5b5" stroke-width="3.4"/><path d="M5.5 3.5 H12 M7 11.9 H11.5" stroke="#dadada" stroke-width=".9"/><path d="M1.5 12 L6.5 8 L6.5 16z" fill="#b5b5b5"/></svg>
<div class="t " style="left:173.6px;top:859.71px;font-size:11.8px;color:#000;font-weight:700;transform:scaleY(1.08);transform-origin:0 12.09px;-webkit-text-stroke:0.05px #000;">Fehlermeldungen</div>
<div class="r" style="left:1387px;top:0px;width:3px;height:864px;background:#ececec;"></div>
<div class="r" style="left:1390px;top:0px;width:154px;height:23px;background:linear-gradient(#f9fbfe,#e7eefa);"></div>
<div class="r" style="left:1390px;top:23px;width:154px;height:1px;background:#e9e9e9;"></div>
<div class="t " style="left:1396px;top:0.91px;font-size:11.8px;color:#0f74dc;font-weight:700;transform:scaleY(1.08);transform-origin:0 12.09px;-webkit-text-stroke:0.05px #0f74dc;">Aktionen</div>
<svg class="r" style="left:1515px;top:1px;" width="18" height="16" viewBox="0 0 18 16"><path d="M5.6 4.2 V2.6 H7.5 V1.2" fill="none" stroke="#9a9a9a" stroke-width="1.1"/><rect x="1.7" y="4.3" width="15" height="9.4" rx=".8" fill="#f8f8f8" stroke="#9a9a9a" stroke-width="1.1"/><rect x="3.6" y="6.4" width="11.2" height="4.6" fill="#9a9a9a"/><g fill="#f8f8f8"><circle cx="6" cy="7.6" r=".55"/><circle cx="8" cy="7.6" r=".55"/><circle cx="10" cy="7.6" r=".55"/><circle cx="12" cy="7.6" r=".55"/><circle cx="7" cy="9.6" r=".55"/><circle cx="9" cy="9.6" r=".55"/><circle cx="11" cy="9.6" r=".55"/><rect x="3.6" y="7.1" width="1.2" height="1" /><rect x="13.6" y="7.1" width="1.2" height="1"/><rect x="3.6" y="9.1" width="2" height="1"/><rect x="12.8" y="9.1" width="2" height="1"/></g><path d="M4.3 11 V12.2 M14 11 V12.2" stroke="#9a9a9a" stroke-width="1"/></svg>
<div class="r" style="left:1544px;top:0px;width:5px;height:864px;background:#a21d23;"></div>
<div class="r" style="left:1548px;top:13px;width:1px;height:62px;background:#9c9c9c;"></div>
<svg class="r" style="left:1397px;top:27px;" width="31" height="30" viewBox="0 0 31 30"><rect x="1.6" y="1.6" width="26.8" height="26.8" rx="2.5" fill="#a9a9a9" stroke="#9a9a9a" stroke-width="1"/><rect x="2.6" y="2.6" width="24.8" height="24.8" rx="1.5" fill="none" stroke="#e4e4e4" stroke-width=".8"/><rect x="6" y="2.6" width="17.5" height="12.6" fill="#f4f4f4"/><path d="M9 6.2 H21 M9 9.2 H21 M9 12.2 H21" stroke="#a4a4a4" stroke-width="1.1" stroke-dasharray="3.2 1"/><rect x="5.5" y="18.2" width="19" height="10" fill="#efefef"/><rect x="10.3" y="20.8" width="3.5" height="6.5" fill="#a9a9a9"/></svg>
<div class="t " style="left:1433.5px;top:34.91px;font-size:11.8px;color:#9b9b9b;font-weight:400;transform:scaleY(1.08);transform-origin:0 12.09px;">Speichern</div>
<svg class="r" style="left:1396px;top:65px;" width="33" height="32" viewBox="0 0 33 32"><rect x="2" y="2" width="30" height="28" fill="#d6d6d6"/><rect x="1" y="1" width="29.5" height="27.5" fill="#f6f6f6" stroke="#a8a8a8"/><rect x="1" y="1" width="29.5" height="4" fill="#f7931e"/><rect x="3.0" y="6.5" width="5" height="5" fill="#f4f4f4" stroke="#c4c4c4" stroke-width=".8"/><rect x="8.2" y="6.5" width="5" height="5" fill="#f4f4f4" stroke="#c4c4c4" stroke-width=".8"/><rect x="13.4" y="6.5" width="5" height="5" fill="#f4f4f4" stroke="#c4c4c4" stroke-width=".8"/><rect x="18.6" y="6.5" width="5" height="5" fill="#f4f4f4" stroke="#c4c4c4" stroke-width=".8"/><rect x="23.8" y="6.5" width="5" height="5" fill="#f4f4f4" stroke="#c4c4c4" stroke-width=".8"/><rect x="3.0" y="11.7" width="5" height="5" fill="#f4f4f4" stroke="#c4c4c4" stroke-width=".8"/><rect x="8.2" y="11.7" width="5" height="5" fill="#f4f4f4" stroke="#c4c4c4" stroke-width=".8"/><rect x="13.4" y="11.7" width="5" height="5" fill="#f4f4f4" stroke="#c4c4c4" stroke-width=".8"/><rect x="18.6" y="11.7" width="5" height="5" fill="#f4f4f4" stroke="#c4c4c4" stroke-width=".8"/><rect x="23.8" y="11.7" width="5" height="5" fill="#f4f4f4" stroke="#c4c4c4" stroke-width=".8"/><rect x="3.0" y="16.9" width="5" height="5" fill="#f4f4f4" stroke="#c4c4c4" stroke-width=".8"/><rect x="8.2" y="16.9" width="5" height="5" fill="#f4f4f4" stroke="#c4c4c4" stroke-width=".8"/><rect x="13.4" y="16.9" width="5" height="5" fill="#f4f4f4" stroke="#c4c4c4" stroke-width=".8"/><rect x="18.6" y="16.9" width="5" height="5" fill="#f4f4f4" stroke="#c4c4c4" stroke-width=".8"/><rect x="23.8" y="16.9" width="5" height="5" fill="#f4f4f4" stroke="#c4c4c4" stroke-width=".8"/><rect x="3.0" y="22.1" width="5" height="5" fill="#f4f4f4" stroke="#c4c4c4" stroke-width=".8"/><rect x="8.2" y="22.1" width="5" height="5" fill="#f4f4f4" stroke="#c4c4c4" stroke-width=".8"/><rect x="13.4" y="22.1" width="5" height="5" fill="#f4f4f4" stroke="#c4c4c4" stroke-width=".8"/><rect x="18.6" y="22.1" width="5" height="5" fill="#f4f4f4" stroke="#c4c4c4" stroke-width=".8"/><rect x="23.8" y="22.1" width="5" height="5" fill="#f4f4f4" stroke="#c4c4c4" stroke-width=".8"/><rect x="18.6" y="6.5" width="5" height="5" fill="#3b8ed8" stroke="#1e5fa8" stroke-width="1"/><rect x="8.2" y="11.7" width="5" height="5" fill="#5a9a3c" stroke="#2f6a20" stroke-width="1"/><rect x="13.4" y="22.1" width="5" height="5" fill="#ffd86a" stroke="#f0a020" stroke-width="1"/></svg>
<div class="t " style="left:1433.5px;top:72.91px;font-size:11.8px;color:#000;font-weight:400;transform:scaleY(1.08);transform-origin:0 12.09px;-webkit-text-stroke:0.15px #000;">Aktivitäten</div>
<svg class="r" style="left:1530px;top:78px;" width="11" height="8" viewBox="0 0 11 8"><path d="M1.7 1.9 H9.3 Q9.9 1.9 9.6 2.6 L5.5 6.4 L1.4 2.6 Q1.1 1.9 1.7 1.9z" fill="#d8dadc" stroke="#585858" stroke-width="1.25" stroke-linejoin="round"/></svg>
<svg class="r" style="left:1397px;top:103px;" width="31" height="30" viewBox="0 0 31 30"><path d="M4.5 3.8 H18 A8.3 8.3 0 0 1 18 20.4 H10" fill="none" stroke="#a6a6a6" stroke-width="5.6"/><path d="M5 3.8 H18 A8.3 8.3 0 0 1 18 20.4" fill="none" stroke="#e2e2e2" stroke-width=".9"/><path d="M1.3 23.5 L11 15.5 L11 28.8z" fill="#a6a6a6"/></svg>
<div class="t " style="left:1433.5px;top:110.91px;font-size:11.8px;color:#9b9b9b;font-weight:400;transform:scaleY(1.08);transform-origin:0 12.09px;">Verwerfen</div>
<div class="t " style="left:1395.3px;top:140.91px;font-size:11.8px;color:#000;font-weight:700;transform:scaleY(1.08);transform-origin:0 12.09px;-webkit-text-stroke:0.05px #000;">Nachricht</div>
<svg class="r" style="left:1399px;top:159px;" width="31" height="31" viewBox="0 0 31 31"><path d="M1.5 1.5 H16.5 L23.5 8.5 V28.5 H1.5 Z" fill="#efefef" stroke="#a8a8a8"/><path d="M16.5 1.5 V8.5 H23.5" fill="#fafafa" stroke="#a8a8a8"/><circle cx="13" cy="15.5" r="7.2" fill="none" stroke="#a5a5a5" stroke-width="2.4" stroke-dasharray="6 1.6" transform="rotate(20 13 15.5)"/><path d="M12 9.5 L16 9 L19.5 12 L19 17 L15.5 19.5 L13 18 L11 14 Z" fill="#a5a5a5"/><path d="M7 17 L11 19 L13 22.5 L9 22.5 L6.5 19.5Z" fill="#a5a5a5"/><circle cx="21" cy="23" r="6.5" fill="#a5a5a5" stroke="#fff" stroke-width=".8"/><path d="M17.5 23 H24.5 M21 19.5 V26.5" stroke="#fff" stroke-width="2"/></svg>
<div class="t " style="left:1433.5px;top:166.91px;font-size:11.8px;color:#9b9b9b;font-weight:400;transform:scaleY(1.08);transform-origin:0 12.09px;">Erstellen</div>
<svg class="r" style="left:1530px;top:172px;" width="11" height="8" viewBox="0 0 11 8"><path d="M1.7 1.9 H9.3 Q9.9 1.9 9.6 2.6 L5.5 6.4 L1.4 2.6 Q1.1 1.9 1.7 1.9z" fill="#d8dadc" stroke="#585858" stroke-width="1.25" stroke-linejoin="round"/></svg>
<svg class="r" style="left:1399px;top:197px;" width="31" height="31" viewBox="0 0 31 31"><path d="M1.5 1.5 H16.5 L23.5 8.5 V28.5 H1.5 Z" fill="#efefef" stroke="#a8a8a8"/><path d="M16.5 1.5 V8.5 H23.5" fill="#fafafa" stroke="#a8a8a8"/><circle cx="13" cy="15.5" r="7.2" fill="none" stroke="#a5a5a5" stroke-width="2.4" stroke-dasharray="6 1.6" transform="rotate(20 13 15.5)"/><path d="M12 9.5 L16 9 L19.5 12 L19 17 L15.5 19.5 L13 18 L11 14 Z" fill="#a5a5a5"/><path d="M7 17 L11 19 L13 22.5 L9 22.5 L6.5 19.5Z" fill="#a5a5a5"/><path d="M16 28 L26 17 L28 19 L18 30 Z" fill="#f2f2f2" stroke="#a5a5a5" stroke-width="1.2"/></svg>
<div class="t " style="left:1433.5px;top:204.91px;font-size:11.8px;color:#9b9b9b;font-weight:400;transform:scaleY(1.08);transform-origin:0 12.09px;">Bearbeiten</div>
<svg class="r" style="left:1399px;top:235px;" width="31" height="31" viewBox="0 0 31 31"><path d="M1.5 1.5 H16.5 L23.5 8.5 V28.5 H1.5 Z" fill="#efefef" stroke="#a8a8a8"/><path d="M16.5 1.5 V8.5 H23.5" fill="#fafafa" stroke="#a8a8a8"/><circle cx="13" cy="15.5" r="7.2" fill="none" stroke="#a5a5a5" stroke-width="2.4" stroke-dasharray="6 1.6" transform="rotate(20 13 15.5)"/><path d="M12 9.5 L16 9 L19.5 12 L19 17 L15.5 19.5 L13 18 L11 14 Z" fill="#a5a5a5"/><path d="M7 17 L11 19 L13 22.5 L9 22.5 L6.5 19.5Z" fill="#a5a5a5"/><path d="M14 24 L19 28.5 L27 19" fill="none" stroke="#a5a5a5" stroke-width="3.2"/></svg>
<div class="t " style="left:1433.5px;top:242.91px;font-size:11.8px;color:#9b9b9b;font-weight:400;transform:scaleY(1.08);transform-origin:0 12.09px;">Prüfen</div>
<svg class="r" style="left:1399px;top:273px;" width="31" height="31" viewBox="0 0 31 31"><path d="M1.5 1.5 H16.5 L23.5 8.5 V28.5 H1.5 Z" fill="#efefef" stroke="#a8a8a8"/><path d="M16.5 1.5 V8.5 H23.5" fill="#fafafa" stroke="#a8a8a8"/><circle cx="13" cy="15.5" r="7.2" fill="none" stroke="#a5a5a5" stroke-width="2.4" stroke-dasharray="6 1.6" transform="rotate(20 13 15.5)"/><path d="M12 9.5 L16 9 L19.5 12 L19 17 L15.5 19.5 L13 18 L11 14 Z" fill="#a5a5a5"/><path d="M7 17 L11 19 L13 22.5 L9 22.5 L6.5 19.5Z" fill="#a5a5a5"/><circle cx="21" cy="23" r="6.8" fill="#a5a5a5"/><path d="M19 19.5 L25 23 L19 26.5Z" fill="#fff"/></svg>
<div class="t " style="left:1433.5px;top:280.91px;font-size:11.8px;color:#9b9b9b;font-weight:400;transform:scaleY(1.08);transform-origin:0 12.09px;">Abarbeiten</div>
<svg class="r" style="left:1399px;top:311px;" width="31" height="31" viewBox="0 0 31 31"><path d="M1.5 1.5 H16.5 L23.5 8.5 V28.5 H1.5 Z" fill="#efefef" stroke="#a8a8a8"/><path d="M16.5 1.5 V8.5 H23.5" fill="#fafafa" stroke="#a8a8a8"/><circle cx="13" cy="15.5" r="7.2" fill="none" stroke="#a5a5a5" stroke-width="2.4" stroke-dasharray="6 1.6" transform="rotate(20 13 15.5)"/><path d="M12 9.5 L16 9 L19.5 12 L19 17 L15.5 19.5 L13 18 L11 14 Z" fill="#a5a5a5"/><path d="M7 17 L11 19 L13 22.5 L9 22.5 L6.5 19.5Z" fill="#a5a5a5"/><circle cx="21" cy="23" r="6.5" fill="#a5a5a5"/><path d="M17 22 H25 L22.5 19.5 M25 24.5 H17 L19.5 27" fill="none" stroke="#fff" stroke-width="1.3"/></svg>
<div class="t " style="left:1433.5px;top:318.91px;font-size:11.8px;color:#9b9b9b;font-weight:400;transform:scaleY(1.08);transform-origin:0 12.09px;">Zurücksetzen</div>
<svg class="r" style="left:1399px;top:349px;" width="31" height="31" viewBox="0 0 31 31"><path d="M1.5 1.5 H16.5 L23.5 8.5 V28.5 H1.5 Z" fill="#efefef" stroke="#a8a8a8"/><path d="M16.5 1.5 V8.5 H23.5" fill="#fafafa" stroke="#a8a8a8"/><circle cx="13" cy="15.5" r="7.2" fill="none" stroke="#a5a5a5" stroke-width="2.4" stroke-dasharray="6 1.6" transform="rotate(20 13 15.5)"/><path d="M12 9.5 L16 9 L19.5 12 L19 17 L15.5 19.5 L13 18 L11 14 Z" fill="#a5a5a5"/><path d="M7 17 L11 19 L13 22.5 L9 22.5 L6.5 19.5Z" fill="#a5a5a5"/><path d="M12 21 H27 V27 H12 Z" fill="#a5a5a5"/><path d="M14 24 H25" stroke="#ddd" stroke-width="1" stroke-dasharray="1.5 1"/></svg>
<div class="t" style="left:1433.5px;top:349.70px;font-size:11.8px;line-height:14.5px;color:#9b9b9b">Zuordnungen lö-<br>schen</div>
<svg class="r" style="left:1399px;top:387px;" width="31" height="31" viewBox="0 0 31 31"><path d="M1.5 1.5 H16.5 L23.5 8.5 V28.5 H1.5 Z" fill="#efefef" stroke="#a8a8a8"/><path d="M16.5 1.5 V8.5 H23.5" fill="#fafafa" stroke="#a8a8a8"/><circle cx="13" cy="15.5" r="7.2" fill="none" stroke="#a5a5a5" stroke-width="2.4" stroke-dasharray="6 1.6" transform="rotate(20 13 15.5)"/><path d="M12 9.5 L16 9 L19.5 12 L19 17 L15.5 19.5 L13 18 L11 14 Z" fill="#a5a5a5"/><path d="M7 17 L11 19 L13 22.5 L9 22.5 L6.5 19.5Z" fill="#a5a5a5"/><path d="M12 20 V30" stroke="#a5a5a5" stroke-width="3"/><path d="M16 20 H26 V28 L21 30 H16 Z" fill="#f4f4f4" stroke="#a5a5a5"/></svg>
<div class="t " style="left:1433.5px;top:394.91px;font-size:11.8px;color:#9b9b9b;font-weight:400;transform:scaleY(1.08);transform-origin:0 12.09px;">Status setzen</div>
<svg class="r" style="left:1399px;top:425px;" width="31" height="31" viewBox="0 0 31 31"><path d="M1.5 1.5 H16.5 L23.5 8.5 V28.5 H1.5 Z" fill="#efefef" stroke="#a8a8a8"/><path d="M16.5 1.5 V8.5 H23.5" fill="#fafafa" stroke="#a8a8a8"/><circle cx="13" cy="15.5" r="7.2" fill="none" stroke="#a5a5a5" stroke-width="2.4" stroke-dasharray="6 1.6" transform="rotate(20 13 15.5)"/><path d="M12 9.5 L16 9 L19.5 12 L19 17 L15.5 19.5 L13 18 L11 14 Z" fill="#a5a5a5"/><path d="M7 17 L11 19 L13 22.5 L9 22.5 L6.5 19.5Z" fill="#a5a5a5"/><rect x="14.5" y="19.5" width="11" height="10" fill="#f0f0f0" stroke="#a5a5a5" stroke-width="1.6"/><path d="M17 22 L23 27 M23 23 V27 H19" fill="none" stroke="#a5a5a5" stroke-width="1.4"/></svg>
<div class="t " style="left:1433.5px;top:432.91px;font-size:11.8px;color:#9b9b9b;font-weight:400;transform:scaleY(1.08);transform-origin:0 12.09px;">Exportieren</div>
<svg class="r" style="left:1399px;top:463px;" width="31" height="31" viewBox="0 0 31 31"><path d="M1.5 1.5 H16.5 L23.5 8.5 V28.5 H1.5 Z" fill="#f6f6f6" stroke="#a8a8a8"/><path d="M16.5 1.5 V8.5 H23.5" fill="#fafafa" stroke="#a8a8a8"/><defs><radialGradient id="gl" cx="35%" cy="30%" r="70%"><stop offset="0" stop-color="#bfe3ff"/><stop offset=".5" stop-color="#2e86d6"/><stop offset="1" stop-color="#0d4f9c"/></radialGradient></defs><circle cx="12" cy="15" r="8" fill="url(#gl)"/><path d="M6 12 Q9 8 13 10 L12 14 L8 16 Z" fill="#3fa84a"/><path d="M12 17 L16 16 L15 21 L12 22Z" fill="#3fa84a"/><rect x="14.5" y="18.5" width="12" height="12" fill="#1a8fe6" stroke="#0f6fc0"/><path d="M18 22 L23.5 27.5 M18 22 H22 M18 22 V26" stroke="#fff" stroke-width="1.6" fill="none"/></svg>
<div class="t " style="left:1433.5px;top:470.91px;font-size:11.8px;color:#000;font-weight:400;transform:scaleY(1.08);transform-origin:0 12.09px;-webkit-text-stroke:0.15px #000;">Importieren</div>
<div class="t " style="left:1395.3px;top:500.91px;font-size:11.8px;color:#000;font-weight:700;transform:scaleY(1.08);transform-origin:0 12.09px;-webkit-text-stroke:0.05px #000;">Anzeigen</div>
<svg class="r" style="left:1396px;top:520px;" width="32" height="28" viewBox="0 0 32 28"><path d="M7 2.5 H27 Q30 2.5 30 5 Q30 7 28 7 L26 7 L24 22 H5 Z" fill="#f2f2f2" stroke="#a8a8a8"/><path d="M5 22 H24 Q23 26 21 26 H3 Q1 26 1.5 24 Q2 22 5 22Z" fill="#f2f2f2" stroke="#a8a8a8"/><g fill="#b8b8b8"><circle cx="11" cy="7" r=".6"/><circle cx="15" cy="7" r=".6"/><circle cx="19" cy="7" r=".6"/><circle cx="23" cy="7" r=".6"/><circle cx="10" cy="11" r=".6"/><circle cx="14" cy="11" r=".6"/><circle cx="18" cy="11" r=".6"/><circle cx="22" cy="11" r=".6"/><circle cx="9" cy="15" r=".6"/><circle cx="13" cy="15" r=".6"/><circle cx="17" cy="15" r=".6"/><circle cx="21" cy="15" r=".6"/><circle cx="8" cy="19" r=".6"/><circle cx="12" cy="19" r=".6"/><circle cx="16" cy="19" r=".6"/><circle cx="20" cy="19" r=".6"/></g></svg>
<div class="t " style="left:1433.5px;top:526.91px;font-size:11.8px;color:#9b9b9b;font-weight:400;transform:scaleY(1.08);transform-origin:0 12.09px;">Protokoll</div>
<svg class="r" style="left:1530px;top:532px;" width="11" height="8" viewBox="0 0 11 8"><path d="M1.7 1.9 H9.3 Q9.9 1.9 9.6 2.6 L5.5 6.4 L1.4 2.6 Q1.1 1.9 1.7 1.9z" fill="#d8dadc" stroke="#585858" stroke-width="1.25" stroke-linejoin="round"/></svg>
<svg class="r" style="left:1396px;top:556px;" width="32" height="32" viewBox="0 0 32 32"><path d="M1.5 1.5 H17.5 L24.5 8.5 V27.5 H1.5 Z" fill="#f4f4f4" stroke="#a8a8a8"/><path d="M17.5 1.5 V8.5 H24.5" fill="#fbfbfb" stroke="#a8a8a8"/><circle cx="23.5" cy="23" r="7.3" fill="#2f86d8" stroke="#1e63ae" stroke-width="1"/><rect x="22.3" y="21" width="2.4" height="6.5" fill="#fff"/><circle cx="23.5" cy="18.5" r="1.3" fill="#fff"/></svg>
<div class="t " style="left:1433.5px;top:564.91px;font-size:11.8px;color:#000;font-weight:400;transform:scaleY(1.08);transform-origin:0 12.09px;-webkit-text-stroke:0.15px #000;">Dokumente</div>
<svg class="r" style="left:1530px;top:570px;" width="11" height="8" viewBox="0 0 11 8"><path d="M1.7 1.9 H9.3 Q9.9 1.9 9.6 2.6 L5.5 6.4 L1.4 2.6 Q1.1 1.9 1.7 1.9z" fill="#d8dadc" stroke="#585858" stroke-width="1.25" stroke-linejoin="round"/></svg>
<svg class="r" style="left:1396px;top:594px;" width="32" height="32" viewBox="0 0 32 32"><path d="M1.5 1.5 H17.5 L24.5 8.5 V27.5 H1.5 Z" fill="#f4f4f4" stroke="#a8a8a8"/><path d="M17.5 1.5 V8.5 H24.5" fill="#fbfbfb" stroke="#a8a8a8"/><circle cx="23.5" cy="23" r="7.3" fill="#a8a8a8" stroke="#c8c8c8" stroke-width="1"/><rect x="22.3" y="21" width="2.4" height="6.5" fill="#fff"/><circle cx="23.5" cy="18.5" r="1.3" fill="#fff"/></svg>
<div class="t " style="left:1433.5px;top:602.91px;font-size:11.8px;color:#9b9b9b;font-weight:400;transform:scaleY(1.08);transform-origin:0 12.09px;">Weitere Details</div>
<svg class="r" style="left:1396px;top:632px;" width="32" height="32" viewBox="0 0 32 32"><path d="M1.5 1.5 H17.5 L24.5 8.5 V27.5 H1.5 Z" fill="#f4f4f4" stroke="#a8a8a8"/><path d="M17.5 1.5 V8.5 H24.5" fill="#fbfbfb" stroke="#a8a8a8"/><circle cx="23.5" cy="23" r="7.3" fill="#a8a8a8" stroke="#c8c8c8" stroke-width="1"/><rect x="22.3" y="21" width="2.4" height="6.5" fill="#fff"/><circle cx="23.5" cy="18.5" r="1.3" fill="#fff"/></svg>
<div class="t" style="left:1433.5px;top:633.70px;font-size:11.8px;line-height:15px;color:#9b9b9b">Weitere Nachrich-<br>ten</div>
</body></html>
